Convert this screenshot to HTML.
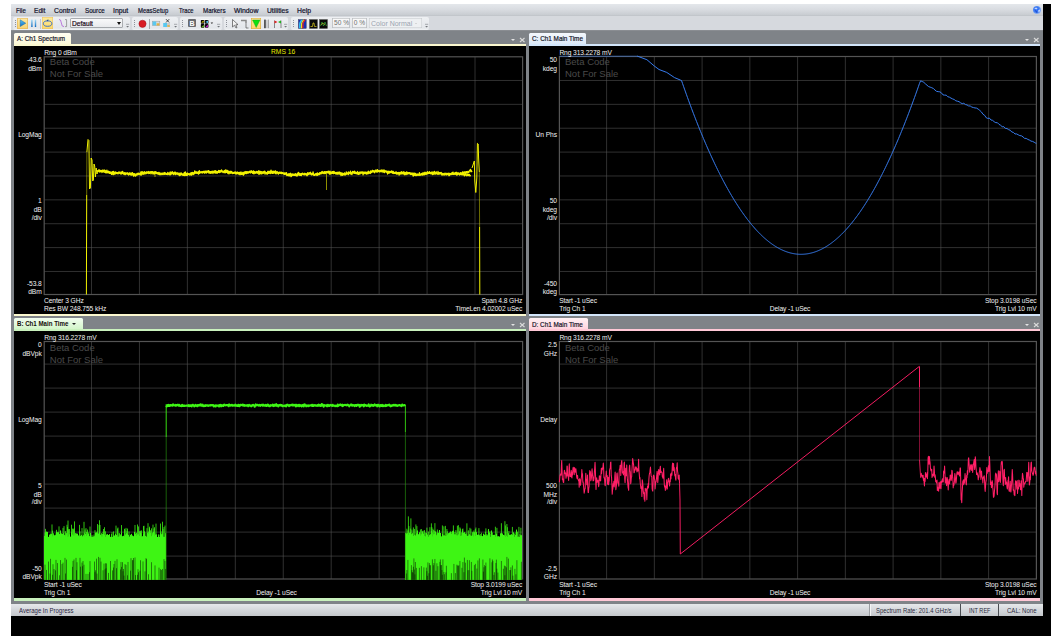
<!DOCTYPE html><html><head><meta charset="utf-8"><style>html,body{margin:0;padding:0;width:1060px;height:642px;overflow:hidden;background:#fff;}body{position:relative;font-family:"Liberation Sans", sans-serif;}.t{font-family:"Liberation Sans", sans-serif;}</style></head><body>
<div style="position:absolute;left:0.00px;top:0.00px;width:1060.00px;height:642.00px;background:#ffffff;"></div>
<div style="position:absolute;left:11.00px;top:4.00px;width:1040.00px;height:632.00px;background:#000000;"></div>
<div style="position:absolute;left:11.00px;top:4.00px;width:1032.00px;height:12.00px;background:linear-gradient(#e4e7eb,#d9dce1 45%,#c8ccd1 92%,#bcc0c5);"></div>
<div style="position:absolute;left:11.00px;top:16.00px;width:1032.00px;height:14.00px;background:#d6d9de;"></div>
<div style="position:absolute;left:11.00px;top:30.00px;width:1032.00px;height:573.50px;background:#7f8388;"></div>
<div style="position:absolute;left:11.00px;top:30.00px;width:1032.00px;height:1.20px;background:#8a8d92;"></div>
<div style="position:absolute;left:11.00px;top:603.50px;width:1032.00px;height:12.00px;background:linear-gradient(#e6e8eb,#d4d7db 50%,#c4c7cb);"></div>
<svg style="position:absolute;left:1031px;top:4px" width="12" height="12"><defs><radialGradient id="gl" cx="45%" cy="45%" r="55%"><stop offset="0" stop-color="#2a6af8"/><stop offset="0.6" stop-color="#3a78f0"/><stop offset="1" stop-color="#9ab8f0"/></radialGradient></defs><circle cx="6" cy="6" r="4.1" fill="url(#gl)"/><path d="M3.2 4.5 L5 3.4 L6.6 4.2 L5.4 5.6 Z M7.2 6.2 L9.2 5.2 L8.8 7.6 L7.4 8.2 Z" fill="#d8e6ff" opacity="0.85"/><path d="M4.5 6.4 L6 8.8" stroke="#1840c0" stroke-width="0.9"/></svg>
<div style="position:absolute;left:13.00px;top:17.00px;width:117.00px;height:12.50px;background:linear-gradient(#eef0f3,#e3e6ea 85%,#f2f4f6);border-radius:2px;"></div>
<div style="position:absolute;left:14.8px;top:19.5px;width:1px;height:8px;background:repeating-linear-gradient(#8e929a 0 0.8px,transparent 0.8px 2px);"></div>
<svg style="position:absolute;left:124.8px;top:22px" width="6" height="7"><path d="M1 2.3 H4.2" stroke="#8a8d92" stroke-width="0.7"/><path d="M1.2 4 L4 4 L2.6 5.6 Z" fill="#6f7277"/></svg>
<div style="position:absolute;left:132.00px;top:17.00px;width:46.00px;height:12.50px;background:linear-gradient(#eef0f3,#e3e6ea 85%,#f2f4f6);border-radius:2px;"></div>
<div style="position:absolute;left:133.8px;top:19.5px;width:1px;height:8px;background:repeating-linear-gradient(#8e929a 0 0.8px,transparent 0.8px 2px);"></div>
<svg style="position:absolute;left:172.8px;top:22px" width="6" height="7"><path d="M1 2.3 H4.2" stroke="#8a8d92" stroke-width="0.7"/><path d="M1.2 4 L4 4 L2.6 5.6 Z" fill="#6f7277"/></svg>
<div style="position:absolute;left:180.00px;top:17.00px;width:41.50px;height:12.50px;background:linear-gradient(#eef0f3,#e3e6ea 85%,#f2f4f6);border-radius:2px;"></div>
<div style="position:absolute;left:181.8px;top:19.5px;width:1px;height:8px;background:repeating-linear-gradient(#8e929a 0 0.8px,transparent 0.8px 2px);"></div>
<svg style="position:absolute;left:216.3px;top:22px" width="6" height="7"><path d="M1 2.3 H4.2" stroke="#8a8d92" stroke-width="0.7"/><path d="M1.2 4 L4 4 L2.6 5.6 Z" fill="#6f7277"/></svg>
<div style="position:absolute;left:224.00px;top:17.00px;width:64.00px;height:12.50px;background:linear-gradient(#eef0f3,#e3e6ea 85%,#f2f4f6);border-radius:2px;"></div>
<div style="position:absolute;left:225.8px;top:19.5px;width:1px;height:8px;background:repeating-linear-gradient(#8e929a 0 0.8px,transparent 0.8px 2px);"></div>
<svg style="position:absolute;left:282.8px;top:22px" width="6" height="7"><path d="M1 2.3 H4.2" stroke="#8a8d92" stroke-width="0.7"/><path d="M1.2 4 L4 4 L2.6 5.6 Z" fill="#6f7277"/></svg>
<div style="position:absolute;left:291.00px;top:17.00px;width:138.00px;height:12.50px;background:linear-gradient(#eef0f3,#e3e6ea 85%,#f2f4f6);border-radius:2px;"></div>
<div style="position:absolute;left:292.8px;top:19.5px;width:1px;height:8px;background:repeating-linear-gradient(#8e929a 0 0.8px,transparent 0.8px 2px);"></div>
<svg style="position:absolute;left:423.8px;top:22px" width="6" height="7"><path d="M1 2.3 H4.2" stroke="#8a8d92" stroke-width="0.7"/><path d="M1.2 4 L4 4 L2.6 5.6 Z" fill="#6f7277"/></svg>
<div style="position:absolute;left:17.20px;top:18.00px;width:10.70px;height:10.70px;background:linear-gradient(#fdeaa6,#f9d270);box-shadow:inset 0 0 0 0.6px #e2b04e;border-radius:1px;"></div>
<svg style="position:absolute;left:17px;top:18px" width="12" height="12"><defs><linearGradient id="pl" x1="0" y1="0" x2="0" y2="1"><stop offset="0" stop-color="#5cc4f4"/><stop offset="1" stop-color="#0f6cc0"/></linearGradient></defs><path d="M3.2 1.8 L8.8 5.2 L3.2 8.6 Z" fill="url(#pl)" stroke="#0b5aa0" stroke-width="0.4"/></svg>
<svg style="position:absolute;left:30px;top:18px" width="8" height="12"><defs><linearGradient id="pa" x1="0" y1="0" x2="0" y2="1"><stop offset="0" stop-color="#a8e0f8"/><stop offset="1" stop-color="#0f6cc0"/></linearGradient></defs><rect x="1.2" y="1.5" width="1.4" height="7.5" fill="url(#pa)"/><rect x="4.8" y="1.5" width="1.4" height="7.5" fill="url(#pa)"/></svg>
<div style="position:absolute;left:40.30px;top:18.50px;width:0.50px;height:10.00px;background:#c4c8cc;"></div>
<div style="position:absolute;left:41.60px;top:17.20px;width:11.90px;height:11.80px;background:linear-gradient(#feec9d,#fbd868);box-shadow:inset 0 0 0 0.5px #ecc060;"></div>
<svg style="position:absolute;left:41px;top:17px" width="13" height="13"><ellipse cx="6.6" cy="6.6" rx="4.2" ry="2.7" fill="none" stroke="#2a64c8" stroke-width="0.9"/><path d="M5.6 3.0 L7.6 2.6 L6.8 4.6 Z" fill="#1848a8"/></svg>
<svg style="position:absolute;left:58px;top:18px" width="11" height="12"><path d="M1 1.5 L2.5 2 L4.2 8 L6 8.6" fill="none" stroke="#b060d8" stroke-width="0.8"/><path d="M7 1.6 H8.6 V8.6 H7" fill="none" stroke="#8a8a8a" stroke-width="0.8"/></svg>
<div style="position:absolute;left:69.80px;top:17.60px;width:53.20px;height:10.70px;background:linear-gradient(#fbfbfc,#e6e8eb);box-shadow:inset 0 0 0 0.7px #8f9397;border-radius:2px;"></div>
<div style="position:absolute;left:117px;top:21.5px;width:0;height:0;border-left:2.5px solid transparent;border-right:2.5px solid transparent;border-top:3px solid #111;"></div>
<svg style="position:absolute;left:137px;top:18px" width="12" height="12"><circle cx="5.5" cy="5.8" r="3.6" fill="#d81c24" stroke="#a01018" stroke-width="0.5"/></svg>
<div style="position:absolute;left:149.20px;top:18.50px;width:0.50px;height:10.00px;background:#a4a8ad;"></div>
<svg style="position:absolute;left:151px;top:18px" width="10" height="12"><rect x="1.3" y="3.2" width="7.5" height="4.5" fill="#d8dadc" stroke="#9a9a9a" stroke-width="0.5"/><rect x="1.6" y="3.5" width="3.6" height="3.9" fill="#58c8f0"/><rect x="5.6" y="5.3" width="2.8" height="2.2" fill="#e0b040"/></svg>
<svg style="position:absolute;left:162px;top:17px" width="10" height="13"><rect x="1.2" y="6" width="3.8" height="4" fill="#58c8f0"/><rect x="5" y="6" width="3" height="4" fill="#c8cacc"/><rect x="5.3" y="8.2" width="2.5" height="1.6" fill="#e0b040"/><path d="M4 2.2 L7.2 5.5 M7.2 2.2 L4 5.5" stroke="#222" stroke-width="0.8"/></svg>
<div style="position:absolute;left:188.00px;top:19.00px;width:8.00px;height:8.00px;background:#6a6c70;border-radius:1px;"></div>
<svg style="position:absolute;left:200px;top:18.5px" width="10" height="10"><rect x="0.3" y="0.6" width="8.6" height="8.6" fill="#fff" rx="0.5"/><rect x="0.8" y="1.1" width="3.6" height="3.6" fill="#080808" rx="0.6"/><rect x="4.9" y="1.1" width="3.6" height="3.6" fill="#080808" rx="0.6"/><rect x="0.8" y="5.1" width="3.6" height="3.6" fill="#080808" rx="0.6"/><rect x="4.9" y="5.1" width="3.6" height="3.6" fill="#080808" rx="0.6"/><path d="M1.2 3.6 H3.6 V1.6 Z" fill="#f0e000"/><path d="M5.4 3 L8 1.6 V4.2 Z" fill="#50c8f0"/><path d="M1.2 8.2 L3.8 8.2 L3.8 6 Z" fill="#70d020"/><path d="M5.5 8.2 L7.8 8.2 L7.8 5.6 Z" fill="#e020e0"/></svg>
<svg style="position:absolute;left:210px;top:21px" width="4" height="4"><path d="M0.6 1.5 L3.2 1.5 L1.9 3 Z" fill="#333"/></svg>
<svg style="position:absolute;left:231px;top:18px" width="8" height="12"><path d="M1.5 1.5 L1.5 9 L3.5 7.2 L5 10 L6 9.5 L4.8 6.8 L7 6.6 Z" fill="#f4f4f4" stroke="#333" stroke-width="0.6"/></svg>
<svg style="position:absolute;left:240px;top:18px" width="10" height="12"><path d="M1 2.5 L6 2.5 L6 5" fill="none" stroke="#888" stroke-width="1.5"/><path d="M6 5 L6 10 L8.5 10" fill="none" stroke="#555" stroke-width="0.7"/></svg>
<div style="position:absolute;left:251.00px;top:17.80px;width:10.20px;height:11.00px;background:linear-gradient(#feeba0,#fbd567);box-shadow:inset 0 0 0 0.6px #d9a83a;"></div>
<svg style="position:absolute;left:251px;top:18px" width="11" height="11"><path d="M1.5 2 L9 2 L5.2 9.5 Z" fill="#10e010" stroke="#0a9a0a" stroke-width="0.4"/></svg>
<svg style="position:absolute;left:263px;top:18px" width="8" height="12"><rect x="1.3" y="1.6" width="1.3" height="8.6" fill="#1a1a1a"/><rect x="4.9" y="1.6" width="0.6" height="8.6" fill="#666"/><path d="M2.8 3 H4.4 M2.8 5 H4.4 M2.8 7 H4.4 M2.8 9 H4.4" stroke="#777" stroke-width="0.5"/></svg>
<svg style="position:absolute;left:273px;top:18px" width="10" height="12"><path d="M1.5 10 V2.5 M8 10 V2.5" stroke="#444" stroke-width="0.6"/><path d="M1.5 2.5 L4.5 4 L1.5 5.5Z" fill="#e02020"/><path d="M8 2.5 L5 4 L8 5.5Z" fill="#20b020"/></svg>
<svg style="position:absolute;left:297.5px;top:18.5px" width="9" height="10"><rect x="0.3" y="0.5" width="8" height="9" fill="#1830b0"/><path d="M1.5 9.5 C2.5 7 1 5 2.5 3 S3.5 1 4 0.5" stroke="#30c0f8" stroke-width="1.6" fill="none"/><path d="M3.2 9.5 C4.2 7 2.7 5 4.2 3 S5.2 1 5.7 0.5" stroke="#f0e020" stroke-width="1.2" fill="none"/><path d="M4.6 9.5 C5.6 7 4.1 5 5.6 3 S6.6 1 7.1 0.5" stroke="#f02020" stroke-width="1.2" fill="none"/><rect x="0.3" y="0.5" width="8" height="9" fill="none" stroke="#445" stroke-width="0.4"/></svg>
<svg style="position:absolute;left:308.5px;top:18.5px" width="9" height="10"><rect x="0.5" y="0.5" width="8" height="9" fill="#0a0a0a" stroke="#555" stroke-width="0.4"/><path d="M1.5 7.5 L3.5 7.5 L4 4 L5 4 L5.5 7.5 L7.5 7.5" stroke="#e0d020" stroke-width="0.7" fill="none"/></svg>
<svg style="position:absolute;left:318.5px;top:18.5px" width="9" height="10"><rect x="0.5" y="0.5" width="8" height="9" fill="#0a0a0a" stroke="#555" stroke-width="0.4"/><path d="M1.5 7 L3 3 L4.5 7 L6 3 L7.5 7" stroke="#40c040" stroke-width="0.6" fill="none"/><path d="M2 6 L4 4 L6 6" stroke="#e0d020" stroke-width="0.5" fill="none"/></svg>
<div style="position:absolute;left:332.40px;top:17.50px;width:18.10px;height:10.80px;background:linear-gradient(#fafafa,#eceef0);box-shadow:inset 0 0 0 0.6px #a6aaae;border-radius:1px;"></div>
<div style="position:absolute;left:352.00px;top:17.50px;width:15.00px;height:10.80px;background:linear-gradient(#fafafa,#eceef0);box-shadow:inset 0 0 0 0.6px #a6aaae;border-radius:1px;"></div>
<div style="position:absolute;left:368.50px;top:17.50px;width:53.50px;height:10.80px;background:#eef0f2;box-shadow:inset 0 0 0 0.5px #c4c7cb;"></div>
<div style="position:absolute;left:415px;top:22.5px;width:0;height:0;border-left:1.5px solid transparent;border-right:1.5px solid transparent;border-top:1.5px solid #bbb;"></div>
<div style="position:absolute;left:14.00px;top:33.00px;width:57.00px;height:11.00px;background:linear-gradient(#fffdf2,#fcf9d8);border-radius:1.5px 1.5px 0 0;"></div>
<div style="position:absolute;left:14.00px;top:44.00px;width:512.00px;height:2.00px;background:#fbf8cf;"></div>
<div style="position:absolute;left:14.00px;top:46.00px;width:512.00px;height:267.60px;background:#000;"></div>
<div style="position:absolute;left:14.00px;top:313.60px;width:512.00px;height:2.40px;background:#fbf8cf;"></div>
<div style="position:absolute;left:511.0px;top:39.0px;width:0;height:0;border-left:2px solid transparent;border-right:2px solid transparent;border-top:2px solid #e4e4e4;"></div>
<svg style="position:absolute;left:518.5px;top:36.5px" width="7" height="7"><path d="M1 1 L5.5 5 M5.5 1 L1 5" stroke="#dadada" stroke-width="1.1"/></svg>
<div style="position:absolute;left:529.00px;top:33.00px;width:57.00px;height:11.00px;background:linear-gradient(#f4f8fd,#dbe8f8);border-radius:1.5px 1.5px 0 0;"></div>
<div style="position:absolute;left:529.00px;top:44.00px;width:511.20px;height:2.00px;background:#d3e6fb;"></div>
<div style="position:absolute;left:529.00px;top:46.00px;width:511.20px;height:267.60px;background:#000;"></div>
<div style="position:absolute;left:529.00px;top:313.60px;width:511.20px;height:2.40px;background:#d3e6fb;"></div>
<div style="position:absolute;left:1025.2px;top:39.0px;width:0;height:0;border-left:2px solid transparent;border-right:2px solid transparent;border-top:2px solid #e4e4e4;"></div>
<svg style="position:absolute;left:1032.7px;top:36.5px" width="7" height="7"><path d="M1 1 L5.5 5 M5.5 1 L1 5" stroke="#dadada" stroke-width="1.1"/></svg>
<div style="position:absolute;left:14.00px;top:318.20px;width:68.50px;height:11.00px;background:linear-gradient(#f2fdf0,#d3f5ca);border-radius:1.5px 1.5px 0 0;"></div>
<div style="position:absolute;left:14.00px;top:329.20px;width:512.00px;height:1.80px;background:#c9f1bd;"></div>
<div style="position:absolute;left:14.00px;top:331.00px;width:512.00px;height:267.00px;background:#000;"></div>
<div style="position:absolute;left:14.00px;top:598.00px;width:512.00px;height:2.75px;background:#c9f1bd;"></div>
<div style="position:absolute;left:511.0px;top:324.0px;width:0;height:0;border-left:2px solid transparent;border-right:2px solid transparent;border-top:2px solid #e4e4e4;"></div>
<svg style="position:absolute;left:518.5px;top:321.5px" width="7" height="7"><path d="M1 1 L5.5 5 M5.5 1 L1 5" stroke="#dadada" stroke-width="1.1"/></svg>
<div style="position:absolute;left:529.00px;top:318.20px;width:58.50px;height:11.00px;background:linear-gradient(#fff1f4,#ffd3de);border-radius:1.5px 1.5px 0 0;"></div>
<div style="position:absolute;left:529.00px;top:329.20px;width:511.20px;height:1.80px;background:#ffc8d6;"></div>
<div style="position:absolute;left:529.00px;top:331.00px;width:511.20px;height:267.00px;background:#000;"></div>
<div style="position:absolute;left:529.00px;top:598.00px;width:511.20px;height:2.75px;background:#ffc8d6;"></div>
<div style="position:absolute;left:1025.2px;top:324.0px;width:0;height:0;border-left:2px solid transparent;border-right:2px solid transparent;border-top:2px solid #e4e4e4;"></div>
<svg style="position:absolute;left:1032.7px;top:321.5px" width="7" height="7"><path d="M1 1 L5.5 5 M5.5 1 L1 5" stroke="#dadada" stroke-width="1.1"/></svg>
<div style="position:absolute;left:72.3px;top:323.2px;width:0;height:0;border-left:2.2px solid transparent;border-right:2.2px solid transparent;border-top:2.6px solid #222;"></div>
<div style="position:absolute;left:869.00px;top:604.00px;width:1.00px;height:11.50px;background:#9a9da2;"></div>
<div style="position:absolute;left:870.00px;top:604.00px;width:1.00px;height:11.50px;background:#f4f5f6;"></div>
<div style="position:absolute;left:959.50px;top:604.00px;width:1.30px;height:11.50px;background:#4a4d52;"></div>
<div style="position:absolute;left:998.20px;top:604.00px;width:1.30px;height:11.50px;background:#4a4d52;"></div>
<svg style="position:absolute;left:0;top:0" width="1060" height="642" viewBox="0 0 1060 642"><path d="M91.50 56.80V294.50M44.20 80.47H522.60M139.44 56.80V294.50M44.20 104.35H522.60M187.38 56.80V294.50M44.20 128.22H522.60M235.32 56.80V294.50M44.20 152.10H522.60M283.26 56.80V294.50M44.20 175.97H522.60M331.20 56.80V294.50M44.20 199.85H522.60M379.14 56.80V294.50M44.20 223.72H522.60M427.08 56.80V294.50M44.20 247.60H522.60M475.02 56.80V294.50M44.20 271.48H522.60" stroke="#585858" stroke-width="0.55" fill="none"/><rect x="44.20" y="56.80" width="478.40" height="237.70" stroke="#545454" stroke-width="1.2" fill="none"/><path d="M606.60 56.50V294.60M559.40 80.47H1036.40M654.35 56.50V294.60M559.40 104.35H1036.40M702.10 56.50V294.60M559.40 128.22H1036.40M749.85 56.50V294.60M559.40 152.10H1036.40M797.60 56.50V294.60M559.40 175.97H1036.40M845.35 56.50V294.60M559.40 199.85H1036.40M893.10 56.50V294.60M559.40 223.72H1036.40M940.85 56.50V294.60M559.40 247.60H1036.40M988.60 56.50V294.60M559.40 271.48H1036.40" stroke="#585858" stroke-width="0.55" fill="none"/><rect x="559.40" y="56.50" width="477.00" height="238.10" stroke="#545454" stroke-width="1.2" fill="none"/><path d="M91.50 341.50V579.00M44.20 364.10H522.60M139.44 341.50V579.00M44.20 388.10H522.60M187.38 341.50V579.00M44.20 412.10H522.60M235.32 341.50V579.00M44.20 436.10H522.60M283.26 341.50V579.00M44.20 460.10H522.60M331.20 341.50V579.00M44.20 484.10H522.60M379.14 341.50V579.00M44.20 508.10H522.60M427.08 341.50V579.00M44.20 532.10H522.60M475.02 341.50V579.00M44.20 556.10H522.60" stroke="#585858" stroke-width="0.55" fill="none"/><rect x="44.20" y="341.50" width="478.40" height="237.50" stroke="#545454" stroke-width="1.2" fill="none"/><path d="M606.60 341.50V579.00M559.40 364.10H1036.40M654.35 341.50V579.00M559.40 388.10H1036.40M702.10 341.50V579.00M559.40 412.10H1036.40M749.85 341.50V579.00M559.40 436.10H1036.40M797.60 341.50V579.00M559.40 460.10H1036.40M845.35 341.50V579.00M559.40 484.10H1036.40M893.10 341.50V579.00M559.40 508.10H1036.40M940.85 341.50V579.00M559.40 532.10H1036.40M988.60 341.50V579.00M559.40 556.10H1036.40" stroke="#585858" stroke-width="0.55" fill="none"/><rect x="559.40" y="341.50" width="477.00" height="237.50" stroke="#545454" stroke-width="1.2" fill="none"/><path d="M86.4 294.5 L86.7 195" stroke="#f2f200" stroke-width="1.0"/><path d="M86.7 195 L86.9 152" stroke="#f2f200" stroke-width="0.45"/><polyline points="86.90,152.00 88.00,139.50 88.90,140.50 89.50,189.00 90.40,188.00 91.20,158.00 92.00,160.00 92.70,181.00 93.40,180.00 94.00,164.00 94.70,166.00 95.40,177.00 96.20,168.00 97.00,174.00 97.80,170.00" stroke="#f2f200" stroke-width="1.00" fill="none" stroke-linejoin="round" /><polyline points="97.80,170.66 98.15,170.91 98.50,170.48 98.85,170.01 99.20,170.39 99.55,170.00 99.90,170.88 100.25,171.95 100.60,170.53 100.95,170.48 101.30,171.42 101.65,171.38 102.00,171.23 102.35,170.47 102.70,171.25 103.05,171.90 103.40,170.33 103.75,171.11 104.10,170.03 104.45,170.58 104.80,170.21 105.15,171.56 105.50,170.80 105.85,172.10 106.20,172.08 106.55,171.86 106.90,170.06 107.25,171.70 107.60,172.15 107.95,172.34 108.30,171.08 108.65,171.97 109.00,171.61 109.35,171.79 109.70,173.33 110.05,171.87 110.40,172.53 110.75,173.29 111.10,172.15 111.45,172.55 111.80,172.75 112.15,172.73 112.50,171.72 112.85,172.77 113.20,173.81 113.55,171.50 113.90,173.43 114.25,172.84 114.60,172.24 114.95,174.36 115.30,173.37 115.65,171.80 116.00,172.82 116.35,173.22 116.70,172.61 117.05,173.31 117.40,172.71 117.75,173.30 118.10,173.92 118.45,172.23 118.80,172.94 119.15,172.42 119.50,172.90 119.85,171.86 120.20,172.36 120.55,172.68 120.90,173.57 121.25,173.79 121.60,171.84 121.95,172.29 122.30,173.47 122.65,171.39 123.00,172.65 123.35,172.98 123.70,174.10 124.05,173.68 124.40,172.91 124.75,172.93 125.10,173.07 125.45,174.54 125.80,173.02 126.15,173.18 126.50,173.75 126.85,173.43 127.20,173.42 127.55,172.74 127.90,173.67 128.25,173.38 128.60,174.72 128.95,174.36 129.30,173.87 129.65,174.47 130.00,173.71 130.35,174.87 130.70,174.06 131.05,174.57 131.40,173.11 131.75,174.45 132.10,172.85 132.45,172.60 132.80,174.00 133.15,173.54 133.50,174.41 133.85,176.08 134.20,173.62 134.55,173.79 134.90,174.44 135.25,174.66 135.60,174.11 135.95,174.07 136.30,174.77 136.65,174.60 137.00,173.33 137.35,174.05 137.70,174.11 138.05,173.19 138.40,174.19 138.75,173.25 139.10,174.66 139.45,173.98 139.80,173.84 140.15,173.24 140.50,173.56 140.85,171.99 141.20,172.62 141.55,173.75 141.90,171.69 142.25,174.01 142.60,171.87 142.95,173.81 143.30,172.47 143.65,173.70 144.00,173.13 144.35,171.74 144.70,173.91 145.05,174.01 145.40,172.76 145.75,172.55 146.10,172.60 146.45,171.91 146.80,173.53 147.15,172.19 147.50,172.56 147.85,171.94 148.20,172.06 148.55,171.52 148.90,173.54 149.25,172.40 149.60,173.30 149.95,172.54 150.30,171.98 150.65,172.29 151.00,172.12 151.35,172.59 151.70,172.31 152.05,172.39 152.40,171.56 152.75,172.05 153.10,174.05 153.45,172.22 153.80,171.96 154.15,173.11 154.50,174.01 154.85,171.76 155.20,172.80 155.55,172.50 155.90,171.64 156.25,173.68 156.60,173.12 156.95,173.24 157.30,172.62 157.65,173.62 158.00,172.87 158.35,173.22 158.70,172.48 159.05,172.43 159.40,174.50 159.75,173.05 160.10,173.72 160.45,173.48 160.80,173.17 161.15,173.14 161.50,174.06 161.85,173.33 162.20,173.45 162.55,173.60 162.90,174.53 163.25,174.13 163.60,173.89 163.95,173.13 164.30,172.46 164.65,174.32 165.00,174.32 165.35,173.42 165.70,173.96 166.05,174.13 166.40,174.15 166.75,174.21 167.10,173.09 167.45,174.65 167.80,172.42 168.15,174.09 168.50,173.78 168.85,174.07 169.20,174.86 169.55,174.53 169.90,172.42 170.25,171.97 170.60,173.97 170.95,172.50 171.30,173.30 171.65,173.98 172.00,171.99 172.35,171.63 172.70,173.53 173.05,173.37 173.40,173.15 173.75,173.39 174.10,172.69 174.45,172.19 174.80,173.30 175.15,172.68 175.50,172.17 175.85,173.93 176.20,173.51 176.55,173.92 176.90,172.84 177.25,173.15 177.60,172.92 177.95,173.05 178.30,173.97 178.65,173.23 179.00,174.19 179.35,174.22 179.70,175.61 180.05,172.92 180.40,174.79 180.75,174.05 181.10,174.15 181.45,173.04 181.80,173.87 182.15,174.87 182.50,174.24 182.85,174.40 183.20,174.12 183.55,175.30 183.90,174.38 184.25,172.65 184.60,173.86 184.95,172.85 185.30,171.82 185.65,173.99 186.00,175.47 186.35,174.43 186.70,173.44 187.05,173.60 187.40,175.23 187.75,174.41 188.10,174.29 188.45,174.16 188.80,174.19 189.15,174.75 189.50,174.49 189.85,174.16 190.20,173.09 190.55,174.27 190.90,173.24 191.25,174.59 191.60,172.63 191.95,173.46 192.30,173.48 192.65,172.35 193.00,174.70 193.35,174.41 193.70,172.79 194.05,173.69 194.40,173.30 194.75,170.82 195.10,173.03 195.45,172.70 195.80,172.74 196.15,171.73 196.50,172.30 196.85,172.30 197.20,173.33 197.55,172.58 197.90,172.24 198.25,173.41 198.60,171.69 198.95,171.77 199.30,170.58 199.65,173.24 200.00,172.71 200.35,172.64 200.70,172.41 201.05,171.93 201.40,171.99 201.75,171.59 202.10,171.61 202.45,171.81 202.80,172.96 203.15,172.19 203.50,171.69 203.85,171.28 204.20,171.23 204.55,173.03 204.90,172.16 205.25,171.81 205.60,171.49 205.95,170.89 206.30,171.74 206.65,172.50 207.00,171.51 207.35,171.65 207.70,171.67 208.05,171.95 208.40,170.60 208.75,171.70 209.10,171.22 209.45,172.62 209.80,171.30 210.15,172.39 210.50,173.15 210.85,171.69 211.20,171.46 211.55,172.09 211.90,171.94 212.25,171.14 212.60,172.30 212.95,173.53 213.30,171.70 213.65,171.73 214.00,171.04 214.35,172.12 214.70,170.85 215.05,170.94 215.40,172.82 215.75,171.05 216.10,172.61 216.45,172.94 216.80,171.90 217.15,172.11 217.50,173.20 217.85,171.45 218.20,171.11 218.55,170.47 218.90,171.56 219.25,172.68 219.60,172.24 219.95,170.70 220.30,170.74 220.65,171.00 221.00,171.62 221.35,171.21 221.70,171.54 222.05,171.59 222.40,171.11 222.75,171.31 223.10,171.51 223.45,171.29 223.80,171.76 224.15,172.87 224.50,171.86 224.85,171.46 225.20,170.09 225.55,171.78 225.90,169.94 226.25,170.41 226.60,172.26 226.95,172.18 227.30,171.54 227.65,170.35 228.00,171.47 228.35,171.28 228.70,172.39 229.05,173.75 229.40,172.18 229.75,171.45 230.10,171.21 230.45,172.17 230.80,172.14 231.15,171.43 231.50,172.51 231.85,171.57 232.20,173.45 232.55,173.48 232.90,173.56 233.25,172.38 233.60,173.24 233.95,172.78 234.30,172.63 234.65,172.73 235.00,172.01 235.35,171.95 235.70,173.79 236.05,173.04 236.40,173.40 236.75,174.07 237.10,171.91 237.45,172.69 237.80,173.48 238.15,173.67 238.50,173.07 238.85,174.20 239.20,173.55 239.55,172.41 239.90,172.63 240.25,174.01 240.60,173.72 240.95,171.81 241.30,174.38 241.65,173.76 242.00,174.32 242.35,172.91 242.70,172.94 243.05,172.24 243.40,175.13 243.75,172.91 244.10,174.28 244.45,172.44 244.80,173.05 245.15,171.53 245.50,172.51 245.85,173.55 246.20,171.71 246.55,173.52 246.90,172.89 247.25,171.74 247.60,172.12 247.95,172.11 248.30,172.40 248.65,171.97 249.00,171.70 249.35,172.08 249.70,171.47 250.05,171.23 250.40,172.20 250.75,172.92 251.10,170.97 251.45,172.18 251.80,171.65 252.15,171.37 252.50,172.83 252.85,171.73 253.20,173.35 253.55,171.53 253.90,172.47 254.25,171.98 254.60,171.57 254.95,172.66 255.30,172.08 255.65,172.71 256.00,172.21 256.35,171.40 256.70,172.21 257.05,172.36 257.40,173.11 257.75,171.65 258.10,172.37 258.45,171.05 258.80,172.98 259.15,171.62 259.50,171.06 259.85,172.48 260.20,173.44 260.55,171.36 260.90,171.73 261.25,172.02 261.60,171.73 261.95,172.95 262.30,172.02 262.65,172.10 263.00,173.15 263.35,172.08 263.70,173.04 264.05,171.91 264.40,171.72 264.75,171.22 265.10,174.17 265.45,172.41 265.80,172.85 266.15,172.62 266.50,172.75 266.85,172.65 267.20,174.11 267.55,171.74 267.90,171.30 268.25,171.71 268.60,171.43 268.95,173.07 269.30,173.11 269.65,171.66 270.00,171.29 270.35,172.09 270.70,173.47 271.05,170.08 271.40,172.74 271.75,171.44 272.10,173.12 272.45,171.41 272.80,172.03 273.15,171.05 273.50,171.47 273.85,173.36 274.20,172.91 274.55,171.94 274.90,171.58 275.25,170.77 275.60,171.99 275.95,172.30 276.30,172.29 276.65,172.31 277.00,171.53 277.35,172.41 277.70,172.48 278.05,173.59 278.40,174.11 278.75,172.56 279.10,172.12 279.45,172.74 279.80,172.37 280.15,172.34 280.50,172.96 280.85,172.25 281.20,173.64 281.55,173.15 281.90,173.52 282.25,173.26 282.60,172.90 282.95,172.81 283.30,173.46 283.65,173.30 284.00,174.01 284.35,173.90 284.70,172.90 285.05,174.12 285.40,173.07 285.75,173.73 286.10,174.06 286.45,172.70 286.80,174.50 287.15,174.62 287.50,174.43 287.85,174.27 288.20,174.36 288.55,173.93 288.90,174.54 289.25,174.35 289.60,174.90 289.95,173.90 290.30,175.07 290.65,175.02 291.00,174.81 291.35,174.58 291.70,175.38 292.05,173.61 292.40,175.31 292.75,175.13 293.10,175.15 293.45,175.22 293.80,174.37 294.15,174.66 294.50,175.36 294.85,175.16 295.20,174.96 295.55,173.55 295.90,175.15 296.25,175.62 296.60,175.46 296.95,174.80 297.30,173.33 297.65,175.29 298.00,174.38 298.35,172.43 298.70,174.72 299.05,173.18 299.40,173.30 299.75,173.80 300.10,175.29 300.45,173.94 300.80,174.42 301.15,175.57 301.50,175.42 301.85,174.04 302.20,173.90 302.55,173.07 302.90,173.50 303.25,174.38 303.60,174.35 303.95,174.11 304.30,174.81 304.65,173.39 305.00,173.96 305.35,174.58 305.70,174.47 306.05,174.86 306.40,174.32 306.75,173.76 307.10,174.31 307.45,173.22 307.80,172.72 308.15,174.51 308.50,174.01 308.85,174.31 309.20,172.71 309.55,173.78 309.90,173.60 310.25,173.40 310.60,172.29 310.95,173.83 311.30,174.82 311.65,174.41 312.00,173.62 312.35,174.08 312.70,174.69 313.05,171.87 313.40,173.96 313.75,174.48 314.10,174.57 314.45,175.37 314.80,174.89 315.15,174.20 315.50,174.16 315.85,174.52 316.20,173.42 316.55,173.77 316.90,174.49 317.25,175.28 317.60,173.54 317.95,173.57 318.30,173.72 318.65,174.57 319.00,173.42 319.35,174.56 319.70,172.54 320.05,173.11 320.40,173.03 320.75,173.76 321.10,173.90 321.45,171.79 321.80,172.20 322.15,173.14 322.50,172.28 322.85,171.53 323.20,173.52 323.55,173.03 323.90,172.97 324.25,172.14 324.60,173.30 324.95,172.24 325.30,173.27 325.65,171.62 326.00,171.63 326.35,172.45 326.70,171.70 327.05,172.78 327.40,172.43 327.75,171.47 328.10,172.26 328.45,171.92 328.80,172.93 329.15,171.70 329.50,171.87 329.85,173.20 330.20,174.04 330.55,173.87 330.90,172.35 331.25,172.51 331.60,173.60 331.95,172.31 332.30,171.67 332.65,172.59 333.00,172.91 333.35,171.93 333.70,171.33 334.05,171.55 334.40,173.29 334.75,172.21 335.10,172.76 335.45,173.10 335.80,173.48 336.15,172.78 336.50,173.50 336.85,172.44 337.20,172.92 337.55,172.44 337.90,174.22 338.25,173.34 338.60,172.82 338.95,173.17 339.30,173.31 339.65,174.09 340.00,172.28 340.35,172.76 340.70,173.31 341.05,175.66 341.40,174.42 341.75,173.58 342.10,174.25 342.45,175.33 342.80,173.50 343.15,173.40 343.50,174.66 343.85,174.07 344.20,174.20 344.55,173.24 344.90,175.17 345.25,174.98 345.60,174.04 345.95,174.11 346.30,171.91 346.65,174.01 347.00,173.31 347.35,173.78 347.70,173.94 348.05,173.09 348.40,171.97 348.75,173.58 349.10,172.65 349.45,172.95 349.80,172.69 350.15,172.86 350.50,171.25 350.85,174.04 351.20,173.24 351.55,173.89 351.90,174.56 352.25,172.96 352.60,171.48 352.95,172.18 353.30,171.91 353.65,172.46 354.00,172.91 354.35,171.23 354.70,173.09 355.05,171.60 355.40,173.05 355.75,172.72 356.10,172.55 356.45,172.75 356.80,172.38 357.15,172.33 357.50,171.48 357.85,172.81 358.20,174.32 358.55,174.44 358.90,173.92 359.25,173.45 359.60,172.35 359.95,174.06 360.30,172.88 360.65,172.88 361.00,172.72 361.35,173.03 361.70,172.62 362.05,172.91 362.40,172.12 362.75,172.69 363.10,174.82 363.45,172.94 363.80,172.80 364.15,173.42 364.50,173.55 364.85,172.08 365.20,172.79 365.55,173.67 365.90,173.14 366.25,172.99 366.60,174.11 366.95,172.29 367.30,172.87 367.65,172.35 368.00,173.91 368.35,171.11 368.70,172.09 369.05,172.15 369.40,173.05 369.75,172.95 370.10,173.52 370.45,171.08 370.80,172.88 371.15,171.98 371.50,171.62 371.85,172.51 372.20,171.28 372.55,170.28 372.90,171.58 373.25,170.61 373.60,171.22 373.95,171.97 374.30,171.86 374.65,172.81 375.00,171.32 375.35,170.20 375.70,170.76 376.05,170.58 376.40,170.29 376.75,171.57 377.10,170.66 377.45,169.56 377.80,171.66 378.15,170.98 378.50,171.33 378.85,171.11 379.20,171.52 379.55,171.03 379.90,171.99 380.25,171.34 380.60,171.31 380.95,171.34 381.30,169.86 381.65,170.91 382.00,170.86 382.35,171.26 382.70,170.04 383.05,172.47 383.40,171.29 383.75,170.28 384.10,169.93 384.45,171.13 384.80,171.34 385.15,170.89 385.50,171.60 385.85,171.07 386.20,172.09 386.55,171.14 386.90,171.75 387.25,172.63 387.60,173.98 387.95,171.18 388.30,171.68 388.65,171.45 389.00,172.82 389.35,171.33 389.70,171.93 390.05,172.35 390.40,171.66 390.75,171.73 391.10,172.17 391.45,170.92 391.80,171.50 392.15,172.37 392.50,172.87 392.85,172.64 393.20,171.41 393.55,172.49 393.90,173.53 394.25,173.37 394.60,172.89 394.95,172.26 395.30,173.50 395.65,172.55 396.00,172.09 396.35,172.39 396.70,174.20 397.05,173.23 397.40,173.98 397.75,172.68 398.10,173.81 398.45,172.58 398.80,172.94 399.15,175.05 399.50,173.68 399.85,172.66 400.20,172.99 400.55,173.32 400.90,174.03 401.25,172.67 401.60,171.67 401.95,172.84 402.30,173.08 402.65,173.16 403.00,174.13 403.35,173.34 403.70,173.75 404.05,172.24 404.40,173.83 404.75,174.83 405.10,173.79 405.45,173.40 405.80,173.35 406.15,174.69 406.50,172.55 406.85,173.24 407.20,173.73 407.55,174.00 407.90,173.09 408.25,173.73 408.60,173.31 408.95,173.68 409.30,173.52 409.65,172.77 410.00,173.71 410.35,174.48 410.70,173.06 411.05,173.69 411.40,174.47 411.75,173.13 412.10,174.18 412.45,173.24 412.80,175.04 413.15,176.03 413.50,175.84 413.85,174.09 414.20,174.90 414.55,174.44 414.90,174.45 415.25,175.64 415.60,173.37 415.95,175.29 416.30,174.43 416.65,175.61 417.00,174.64 417.35,173.96 417.70,174.72 418.05,175.09 418.40,174.52 418.75,174.87 419.10,174.05 419.45,172.74 419.80,175.14 420.15,174.95 420.50,174.48 420.85,174.38 421.20,175.11 421.55,173.87 421.90,173.63 422.25,173.99 422.60,175.04 422.95,172.93 423.30,174.93 423.65,173.41 424.00,172.98 424.35,174.81 424.70,173.66 425.05,172.64 425.40,173.33 425.75,174.30 426.10,174.45 426.45,173.09 426.80,173.70 427.15,173.89 427.50,172.75 427.85,173.49 428.20,173.13 428.55,172.68 428.90,172.68 429.25,173.08 429.60,173.02 429.95,172.51 430.30,172.59 430.65,173.80 431.00,173.06 431.35,173.58 431.70,173.82 432.05,173.32 432.40,174.66 432.75,172.19 433.10,173.50 433.45,172.61 433.80,174.36 434.15,174.26 434.50,171.35 434.85,172.17 435.20,173.50 435.55,173.63 435.90,173.63 436.25,173.02 436.60,173.48 436.95,173.68 437.30,173.14 437.65,174.07 438.00,171.49 438.35,173.85 438.70,172.56 439.05,174.21 439.40,173.30 439.75,172.82 440.10,173.88 440.45,172.90 440.80,172.95 441.15,172.47 441.50,173.74 441.85,174.20 442.20,174.66 442.55,173.77 442.90,174.75 443.25,173.96 443.60,173.90 443.95,174.46 444.30,174.87 444.65,173.78 445.00,173.87 445.35,173.95 445.70,174.16 446.05,173.38 446.40,174.93 446.75,173.79 447.10,174.48 447.45,173.45 447.80,174.40 448.15,174.42 448.50,173.76 448.85,175.70 449.20,174.37 449.55,175.49 449.90,174.82 450.25,173.51 450.60,173.72 450.95,174.36 451.30,174.05 451.65,174.02 452.00,173.74 452.35,172.51 452.70,173.77 453.05,172.16 453.40,174.23 453.75,173.34 454.10,173.35 454.45,173.74 454.80,174.14 455.15,172.78 455.50,172.53 455.85,173.08 456.20,172.31 456.55,173.19 456.90,175.25 457.25,173.15 457.60,174.54 457.95,172.95 458.30,174.22 458.65,173.65 459.00,173.79 459.35,174.22 459.70,175.10 460.05,173.79 460.40,173.67 460.75,172.73 461.10,173.91 461.45,173.19 461.80,173.99 462.15,173.23 462.50,174.60 462.85,171.56 463.20,172.85 463.55,173.74 463.90,172.69 464.25,172.27 464.60,172.63 464.95,171.67 465.30,172.80 465.65,174.59 466.00,173.47 466.35,171.59 466.70,171.70 467.05,171.99 467.40,173.03 467.75,171.47 468.10,171.48 468.45,172.64 468.80,172.51 469.15,171.41 469.50,170.70 469.85,170.23 470.20,170.78 470.55,169.43 470.90,171.68 471.25,170.43 471.60,171.17 471.95,172.13" stroke="#f2f200" stroke-width="1.30" fill="none" stroke-linejoin="round" /><path d="M479.3 172 L479.6 227" stroke="#f2f200" stroke-width="0.45"/><path d="M479.6 227 L479.8 294.5" stroke="#f2f200" stroke-width="1.0"/><polyline points="472.00,168.00 474.30,161.00 474.80,181.00 475.80,192.50 476.80,178.00 477.40,143.30 478.20,144.00 478.60,158.00 479.30,172.00" stroke="#f2f200" stroke-width="1.00" fill="none" stroke-linejoin="round" /><polyline points="98.00,171.77 98.50,170.41 99.00,171.66 99.50,171.88 100.00,170.80 100.50,170.74 101.00,171.32 101.50,170.50 102.00,172.43 102.50,170.19 103.00,171.06 103.50,171.66 104.00,171.78 104.50,172.11 105.00,172.27 105.50,172.08 106.00,172.98 106.50,171.11 107.00,172.48 107.50,172.13 108.00,172.72 108.50,172.84 109.00,172.23 109.50,172.46 110.00,173.37 110.50,173.15 111.00,172.58 111.50,174.24 112.00,174.44 112.50,172.20 113.00,173.27 113.50,174.61 114.00,173.59 114.50,173.26 115.00,173.00 115.50,172.81 116.00,173.00 116.50,172.80 117.00,173.58 117.50,172.89 118.00,172.87 118.50,172.42 119.00,173.12 119.50,172.62 120.00,173.07 120.50,173.82 121.00,173.44 121.50,173.56 122.00,173.50 122.50,173.37 123.00,173.30 123.50,173.24 124.00,173.94 124.50,172.90 125.00,174.42 125.50,173.70 126.00,173.30 126.50,173.53 127.00,173.49 127.50,174.07 128.00,173.62 128.50,174.81 129.00,173.73 129.50,172.90 130.00,173.89 130.50,173.19 131.00,174.42 131.50,175.13 132.00,174.93 132.50,173.77 133.00,174.14 133.50,175.68 134.00,174.82 134.50,174.63 135.00,175.25 135.50,176.07 136.00,175.35 136.50,174.62 137.00,174.70 137.50,174.81 138.00,174.01 138.50,173.67 139.00,174.26 139.50,173.59 140.00,174.03 140.50,174.04 141.00,175.30 141.50,173.29 142.00,173.63 142.50,173.51 143.00,173.78 143.50,174.06 144.00,173.05 144.50,172.77 145.00,172.21 145.50,172.57 146.00,173.38 146.50,173.03 147.00,172.35 147.50,172.69 148.00,172.90 148.50,173.16 149.00,172.49 149.50,172.69 150.00,171.76 150.50,172.17 151.00,173.85 151.50,171.59 152.00,172.74 152.50,173.11 153.00,172.80 153.50,172.59 154.00,173.09 154.50,173.19 155.00,173.20 155.50,172.18 156.00,173.28 156.50,172.92 157.00,173.16 157.50,173.68 158.00,173.99 158.50,174.19 159.00,173.40 159.50,174.30 160.00,174.48 160.50,174.49 161.00,174.67 161.50,173.77 162.00,173.76 162.50,174.37 163.00,173.06 163.50,174.00 164.00,173.55 164.50,173.64 165.00,172.80 165.50,173.29 166.00,173.79 166.50,174.31 167.00,174.34 167.50,173.67 168.00,173.58 168.50,173.17 169.00,173.89 169.50,173.48 170.00,173.98 170.50,174.65 171.00,173.57 171.50,172.69 172.00,173.07 172.50,172.72 173.00,172.89 173.50,174.41 174.00,173.79 174.50,172.77 175.00,174.11 175.50,174.52 176.00,173.60 176.50,173.46 177.00,173.72 177.50,174.15 178.00,174.43 178.50,174.81 179.00,174.90 179.50,174.95 180.00,175.11 180.50,174.76 181.00,173.50 181.50,174.39 182.00,174.71 182.50,174.34 183.00,175.15 183.50,174.42 184.00,174.11 184.50,175.54 185.00,175.08 185.50,174.81 186.00,175.22 186.50,175.28 187.00,174.81 187.50,173.09 188.00,174.11 188.50,174.18 189.00,173.79 189.50,174.42 190.00,174.93 190.50,173.83 191.00,173.34 191.50,175.13 192.00,173.53 192.50,172.95 193.00,173.71 193.50,173.71 194.00,172.91 194.50,173.69 195.00,172.80 195.50,172.43 196.00,172.97 196.50,173.22 197.00,172.28 197.50,172.76 198.00,172.41 198.50,174.08 199.00,171.88 199.50,173.07 200.00,172.15 200.50,172.05 201.00,172.51 201.50,172.58 202.00,172.77 202.50,172.19 203.00,171.62 203.50,171.65 204.00,172.27 204.50,172.32 205.00,172.82 205.50,172.24 206.00,172.64 206.50,172.93 207.00,172.14 207.50,171.17 208.00,171.38 208.50,171.24 209.00,173.07 209.50,171.62 210.00,172.88 210.50,172.50 211.00,173.19 211.50,172.76 212.00,172.09 212.50,172.03 213.00,172.18 213.50,172.22 214.00,171.77 214.50,172.05 215.00,173.00 215.50,170.98 216.00,172.12 216.50,171.38 217.00,172.00 217.50,172.35 218.00,171.77 218.50,172.23 219.00,170.77 219.50,172.35 220.00,171.29 220.50,171.99 221.00,171.70 221.50,170.02 222.00,171.10 222.50,171.68 223.00,172.48 223.50,171.72 224.00,171.72 224.50,170.74 225.00,172.48 225.50,172.74 226.00,171.72 226.50,171.62 227.00,170.84 227.50,172.41 228.00,173.58 228.50,172.47 229.00,172.88 229.50,172.54 230.00,171.72 230.50,173.21 231.00,171.76 231.50,172.48 232.00,172.87 232.50,173.33 233.00,173.15 233.50,173.22 234.00,172.62 234.50,172.38 235.00,173.27 235.50,172.88 236.00,172.58 236.50,172.66 237.00,173.17 237.50,172.39 238.00,172.72 238.50,172.56 239.00,173.66 239.50,173.80 240.00,174.75 240.50,172.62 241.00,173.09 241.50,174.01 242.00,173.29 242.50,173.17 243.00,174.34 243.50,173.05 244.00,172.49 244.50,172.33 245.00,173.25 245.50,173.16 246.00,172.08 246.50,172.24 247.00,173.09 247.50,173.04 248.00,172.25 248.50,172.95 249.00,172.86 249.50,171.40 250.00,172.24 250.50,172.63 251.00,172.01 251.50,171.05 252.00,172.14 252.50,172.75 253.00,173.24 253.50,170.98 254.00,173.87 254.50,171.64 255.00,172.91 255.50,173.11 256.00,172.98 256.50,172.51 257.00,171.76 257.50,172.87 258.00,172.10 258.50,171.06 259.00,174.31 259.50,173.07 260.00,173.77 260.50,172.17 261.00,173.62 261.50,173.72 262.00,173.72 262.50,172.79 263.00,172.09 263.50,172.72 264.00,171.50 264.50,171.80 265.00,172.87 265.50,172.20 266.00,172.68 266.50,172.69 267.00,173.89 267.50,173.48 268.00,172.64 268.50,173.36 269.00,172.13 269.50,172.36 270.00,173.07 270.50,171.75 271.00,172.29 271.50,171.64 272.00,172.48 272.50,173.37 273.00,171.92 273.50,172.50 274.00,171.83 274.50,171.69 275.00,171.65 275.50,173.29 276.00,173.86 276.50,172.78 277.00,172.11 277.50,173.02 278.00,172.46 278.50,173.22 279.00,172.99 279.50,173.08 280.00,173.37 280.50,172.76 281.00,172.98 281.50,172.30 282.00,173.18 282.50,172.71 283.00,173.60 283.50,173.23 284.00,173.98 284.50,174.31 285.00,173.30 285.50,173.78 286.00,173.80 286.50,174.92 287.00,175.59 287.50,175.16 288.00,174.52 288.50,175.68 289.00,173.95 289.50,175.81 290.00,174.56 290.50,173.32 291.00,176.60 291.50,175.97 292.00,174.41 292.50,175.13 293.00,174.88 293.50,175.05 294.00,174.07 294.50,174.52 295.00,175.17 295.50,174.98 296.00,175.51 296.50,174.79 297.00,176.10 297.50,174.20 298.00,174.73 298.50,173.37 299.00,173.71 299.50,175.20 300.00,173.79 300.50,174.62 301.00,174.22 301.50,173.59 302.00,173.97 302.50,173.84 303.00,173.83 303.50,174.55 304.00,174.48 304.50,173.73 305.00,173.52 305.50,174.23 306.00,174.00 306.50,174.69 307.00,175.67 307.50,174.59 308.00,174.08 308.50,174.01 309.00,173.61 309.50,173.59 310.00,173.54 310.50,173.91 311.00,173.90 311.50,174.60 312.00,173.91 312.50,174.03 313.00,173.40 313.50,175.10 314.00,174.39 314.50,175.13 315.00,174.49 315.50,174.86 316.00,173.77 316.50,174.29 317.00,175.42 317.50,172.99 318.00,174.36 318.50,174.59 319.00,173.74 319.50,173.86 320.00,174.07 320.50,172.81 321.00,173.37 321.50,172.49 322.00,172.52 322.50,172.47 323.00,172.67 323.50,172.77 324.00,172.88 324.50,171.65 325.00,173.67 325.50,173.11 326.00,172.79 326.50,172.09 327.00,172.22 327.50,172.58 328.00,172.48 328.50,171.19 329.00,172.69 329.50,174.04 330.00,171.13 330.50,172.91 331.00,172.56 331.50,172.32 332.00,173.28 332.50,171.77 333.00,172.67 333.50,173.54 334.00,172.59 334.50,172.54 335.00,172.94 335.50,172.68 336.00,173.99 336.50,172.56 337.00,173.73 337.50,172.50 338.00,173.75 338.50,173.34 339.00,171.87 339.50,173.52 340.00,172.91 340.50,173.34 341.00,174.59 341.50,172.98 342.00,173.03 342.50,174.58 343.00,173.77 343.50,174.64 344.00,173.88 344.50,173.11 345.00,173.59 345.50,174.35 346.00,174.14 346.50,173.51 347.00,173.50 347.50,173.35 348.00,173.01 348.50,174.50 349.00,173.26 349.50,172.50 350.00,172.85 350.50,173.54 351.00,173.44 351.50,172.91 352.00,172.54 352.50,172.93 353.00,171.85 353.50,172.05 354.00,173.32 354.50,172.52 355.00,173.03 355.50,173.54 356.00,173.19 356.50,172.80 357.00,174.11 357.50,173.22 358.00,172.60 358.50,173.28 359.00,173.10 359.50,172.34 360.00,172.93 360.50,172.80 361.00,171.71 361.50,172.83 362.00,172.78 362.50,172.69 363.00,171.95 363.50,172.75 364.00,172.94 364.50,173.02 365.00,172.24 365.50,173.30 366.00,172.13 366.50,172.70 367.00,173.60 367.50,172.32 368.00,172.37 368.50,173.28 369.00,172.31 369.50,172.28 370.00,172.52 370.50,172.94 371.00,170.84 371.50,171.60 372.00,171.39 372.50,171.24 373.00,171.29 373.50,171.20 374.00,171.80 374.50,170.98 375.00,171.51 375.50,171.60 376.00,170.83 376.50,171.28 377.00,172.14 377.50,171.28 378.00,170.64 378.50,170.96 379.00,170.40 379.50,171.12 380.00,171.47 380.50,170.44 381.00,170.83 381.50,171.66 382.00,170.70 382.50,171.17 383.00,170.47 383.50,170.66 384.00,170.91 384.50,172.60 385.00,171.13 385.50,171.14 386.00,171.21 386.50,171.54 387.00,172.13 387.50,171.95 388.00,173.16 388.50,172.15 389.00,172.99 389.50,172.38 390.00,172.66 390.50,171.52 391.00,172.39 391.50,172.50 392.00,172.46 392.50,171.38 393.00,173.26 393.50,172.55 394.00,172.56 394.50,172.71 395.00,172.76 395.50,173.17 396.00,172.18 396.50,172.40 397.00,173.14 397.50,173.06 398.00,172.75 398.50,172.64 399.00,172.48 399.50,172.94 400.00,173.68 400.50,172.34 401.00,173.88 401.50,173.48 402.00,172.70 402.50,173.45 403.00,172.11 403.50,171.96 404.00,172.25 404.50,172.80 405.00,172.88 405.50,172.80 406.00,173.21 406.50,171.91 407.00,173.54 407.50,172.45 408.00,172.96 408.50,173.17 409.00,172.79 409.50,172.73 410.00,173.02 410.50,173.69 411.00,174.13 411.50,174.18 412.00,173.32 412.50,173.51 413.00,173.50 413.50,174.38 414.00,172.95 414.50,174.97 415.00,173.98 415.50,173.84 416.00,174.54 416.50,174.98 417.00,174.59 417.50,175.02 418.00,174.46 418.50,175.11 419.00,175.10 419.50,174.26 420.00,175.15 420.50,174.34 421.00,174.24 421.50,173.57 422.00,173.88 422.50,174.45 423.00,173.12 423.50,174.21 424.00,173.94 424.50,173.81 425.00,172.23 425.50,173.41 426.00,173.77 426.50,172.84 427.00,173.26 427.50,171.70 428.00,173.46 428.50,172.59 429.00,173.45 429.50,171.76 430.00,173.24 430.50,172.64 431.00,173.23 431.50,172.17 432.00,172.34 432.50,174.05 433.00,172.21 433.50,172.30 434.00,172.58 434.50,172.16 435.00,173.52 435.50,173.89 436.00,172.48 436.50,171.92 437.00,173.72 437.50,173.74 438.00,173.64 438.50,173.91 439.00,172.76 439.50,173.25 440.00,172.59 440.50,172.63 441.00,174.14 441.50,173.21 442.00,175.04 442.50,173.77 443.00,173.39 443.50,174.29 444.00,174.93 444.50,174.17 445.00,173.18 445.50,174.15 446.00,174.76 446.50,173.65 447.00,173.49 447.50,174.56 448.00,174.02 448.50,173.27 449.00,173.69 449.50,173.45 450.00,174.06 450.50,173.93 451.00,174.53 451.50,174.24 452.00,172.86 452.50,174.03 453.00,174.30 453.50,174.03 454.00,174.36 454.50,173.41 455.00,173.17 455.50,174.31 456.00,173.12 456.50,172.48 457.00,174.42 457.50,173.40 458.00,173.68 458.50,173.07 459.00,173.16 459.50,173.31 460.00,173.84 460.50,174.34 461.00,172.80 461.50,174.69 462.00,173.60 462.50,173.73 463.00,174.84 463.50,174.46 464.00,173.64 464.50,175.73 465.00,174.16 465.50,174.87 466.00,174.89 466.50,175.65 467.00,174.56 467.50,175.46 468.00,174.42 468.50,175.54 469.00,174.40 469.50,174.63 470.00,175.95 470.50,174.97" stroke="#f2f200" stroke-width="1.40" fill="none" stroke-linejoin="round" /><path d="M155 172 V177 M326.5 173 V190" stroke="#f2f200" stroke-width="0.6"/><path d="M559.4 56.2 H637" stroke="#3a82fa" stroke-width="0.7" stroke-opacity="0.7"/><polyline points="637.00,56.00 641.00,57.50 646.90,59.70 654.30,66.00 659.00,69.50 666.70,72.40 674.50,77.60 680.70,80.20 681.50,80.51 682.50,83.41 683.50,86.28 684.50,89.13 685.50,91.95 686.50,94.75 687.50,97.52 688.50,100.27 689.50,103.00 690.50,105.70 691.50,108.38 692.50,111.03 693.50,113.66 694.50,116.26 695.50,118.84 696.50,121.40 697.50,123.93 698.50,126.44 699.50,128.92 700.50,131.38 701.50,133.81 702.50,136.22 703.50,138.61 704.50,140.97 705.50,143.31 706.50,145.62 707.50,147.91 708.50,150.17 709.50,152.41 710.50,154.62 711.50,156.82 712.50,158.98 713.50,161.12 714.50,163.24 715.50,165.33 716.50,167.40 717.50,169.45 718.50,171.47 719.50,173.46 720.50,175.44 721.50,177.38 722.50,179.31 723.50,181.20 724.50,183.08 725.50,184.93 726.50,186.75 727.50,188.55 728.50,190.33 729.50,192.08 730.50,193.81 731.50,195.52 732.50,197.20 733.50,198.85 734.50,200.48 735.50,202.09 736.50,203.67 737.50,205.23 738.50,206.76 739.50,208.27 740.50,209.75 741.50,211.22 742.50,212.65 743.50,214.06 744.50,215.45 745.50,216.81 746.50,218.15 747.50,219.47 748.50,220.76 749.50,222.02 750.50,223.26 751.50,224.48 752.50,225.67 753.50,226.84 754.50,227.99 755.50,229.11 756.50,230.20 757.50,231.27 758.50,232.32 759.50,233.34 760.50,234.34 761.50,235.31 762.50,236.26 763.50,237.19 764.50,238.09 765.50,238.96 766.50,239.81 767.50,240.64 768.50,241.45 769.50,242.22 770.50,242.98 771.50,243.71 772.50,244.41 773.50,245.10 774.50,245.75 775.50,246.39 776.50,246.99 777.50,247.58 778.50,248.14 779.50,248.67 780.50,249.19 781.50,249.67 782.50,250.13 783.50,250.57 784.50,250.99 785.50,251.38 786.50,251.74 787.50,252.08 788.50,252.40 789.50,252.69 790.50,252.96 791.50,253.20 792.50,253.42 793.50,253.62 794.50,253.79 795.50,253.93 796.50,254.05 797.50,254.15 798.50,254.22 799.50,254.27 800.50,254.30 801.50,254.30 802.50,254.27 803.50,254.22 804.50,254.15 805.50,254.05 806.50,253.93 807.50,253.79 808.50,253.62 809.50,253.42 810.50,253.20 811.50,252.96 812.50,252.69 813.50,252.40 814.50,252.08 815.50,251.74 816.50,251.38 817.50,250.99 818.50,250.57 819.50,250.13 820.50,249.67 821.50,249.19 822.50,248.67 823.50,248.14 824.50,247.58 825.50,246.99 826.50,246.39 827.50,245.75 828.50,245.10 829.50,244.41 830.50,243.71 831.50,242.98 832.50,242.22 833.50,241.45 834.50,240.64 835.50,239.81 836.50,238.96 837.50,238.09 838.50,237.19 839.50,236.26 840.50,235.31 841.50,234.34 842.50,233.34 843.50,232.32 844.50,231.27 845.50,230.20 846.50,229.11 847.50,227.99 848.50,226.84 849.50,225.67 850.50,224.48 851.50,223.26 852.50,222.02 853.50,220.76 854.50,219.47 855.50,218.15 856.50,216.81 857.50,215.45 858.50,214.06 859.50,212.65 860.50,211.22 861.50,209.75 862.50,208.27 863.50,206.76 864.50,205.23 865.50,203.67 866.50,202.09 867.50,200.48 868.50,198.85 869.50,197.20 870.50,195.52 871.50,193.81 872.50,192.08 873.50,190.33 874.50,188.55 875.50,186.75 876.50,184.93 877.50,183.08 878.50,181.20 879.50,179.31 880.50,177.38 881.50,175.44 882.50,173.46 883.50,171.47 884.50,169.45 885.50,167.40 886.50,165.33 887.50,163.24 888.50,161.12 889.50,158.98 890.50,156.82 891.50,154.62 892.50,152.41 893.50,150.17 894.50,147.91 895.50,145.62 896.50,143.31 897.50,140.97 898.50,138.61 899.50,136.22 900.50,133.81 901.50,131.38 902.50,128.92 903.50,126.44 904.50,123.93 905.50,121.40 906.50,118.84 907.50,116.26 908.50,113.66 909.50,111.03 910.50,108.38 911.50,105.70 912.50,103.00 913.50,100.27 914.50,97.52 915.50,94.75 916.50,91.95 917.50,89.13 918.50,86.28 919.50,83.41 920.60,80.80 922.20,81.49 923.80,82.31 925.40,83.85 927.00,85.21 928.60,86.59 930.20,87.16 931.80,87.74 933.40,88.52 935.00,90.09 936.60,91.37 938.20,91.64 939.80,91.84 941.40,92.84 943.00,94.88 944.60,95.13 946.20,95.14 947.80,96.76 949.40,97.16 951.00,98.14 952.60,98.91 954.20,99.51 955.80,100.78 957.40,101.21 959.00,101.66 960.60,102.80 962.20,103.67 963.80,103.25 965.40,104.56 967.00,104.92 968.60,105.95 970.20,105.96 971.80,107.06 973.40,107.55 975.00,107.94 976.60,108.11 978.20,109.13 979.80,110.43 981.40,111.94 983.00,114.27 984.60,115.29 986.20,117.71 987.80,118.42 989.40,118.11 991.00,120.04 992.60,120.33 994.20,121.75 995.80,122.67 997.40,122.66 999.00,124.36 1000.60,125.26 1002.20,126.72 1003.80,126.67 1005.40,128.44 1007.00,128.52 1008.60,129.68 1010.20,130.21 1011.80,132.00 1013.40,132.37 1015.00,133.97 1016.60,133.93 1018.20,134.78 1019.80,135.62 1021.40,135.81 1023.00,136.89 1024.60,138.37 1026.20,138.41 1027.80,139.42 1029.40,140.07 1031.00,141.10 1032.60,141.41 1034.20,142.25 1035.80,143.18 1036.30,143.30" stroke="#3a82fa" stroke-width="0.95" fill="none" stroke-linejoin="round" /><path d="M44.50 535.92V579.90M45.50 532.47V579.90M46.50 531.64V579.90M47.50 531.94V579.90M48.50 536.86V579.90M49.50 534.60V579.90M50.50 534.59V579.90M51.50 533.75V579.90M52.50 536.33V579.90M53.50 534.50V579.90M54.50 535.25V579.90M55.50 535.09V579.90M56.50 531.92V579.90M57.50 532.29V579.90M58.50 532.34V579.90M59.50 534.09V579.90M60.50 530.45V579.90M61.50 533.37V579.90M62.50 533.93V579.90M63.50 533.14V579.90M64.50 535.11V579.90M65.50 536.36V579.90M66.50 534.54V579.90M67.50 536.99V579.90M68.50 536.56V579.90M69.50 534.32V579.90M70.50 536.63V579.90M71.50 532.25V579.90M72.50 534.68V579.90M73.50 535.59V579.90M74.50 535.50V579.90M75.50 534.41V579.90M76.50 533.46V579.90M77.50 533.96V579.90M78.50 535.45V579.90M79.50 536.51V579.90M80.50 535.82V579.90M81.50 534.97V579.90M82.50 536.28V579.90M83.50 535.18V579.90M84.50 536.43V579.90M85.50 534.04V579.90M86.50 535.98V579.90M87.50 534.45V579.90M88.50 533.90V579.90M89.50 536.13V579.90M90.50 532.91V579.90M91.50 536.70V579.90M92.50 536.76V579.90M93.50 536.41V579.90M94.50 536.20V579.90M95.50 532.98V579.90M96.50 532.73V579.90M97.50 533.35V579.90M98.50 533.48V579.90M99.50 531.83V579.90M100.50 534.80V579.90M101.50 536.48V579.90M102.50 536.67V579.90M103.50 533.86V579.90M104.50 534.83V579.90M105.50 536.77V579.90M106.50 534.92V579.90M107.50 535.08V579.90M108.50 535.00V579.90M109.50 534.20V579.90M110.50 536.82V579.90M111.50 536.95V579.90M112.50 536.94V579.90M113.50 535.64V579.90M114.50 535.47V579.90M115.50 533.89V579.90M116.50 535.05V579.90M117.50 536.75V579.90M118.50 536.59V579.90M119.50 536.40V579.90M120.50 535.41V579.90M121.50 532.74V579.90M122.50 536.18V579.90M123.50 535.80V579.90M124.50 536.40V579.90M125.50 534.46V579.90M126.50 533.18V579.90M127.50 534.22V579.90M128.50 534.92V579.90M129.50 536.64V579.90M130.50 534.78V579.90M131.50 533.85V579.90M132.50 535.50V579.90M133.50 536.16V579.90M134.50 531.94V579.90M135.50 534.16V579.90M136.50 535.94V579.90M137.50 534.47V579.90M138.50 534.33V579.90M139.50 535.99V579.90M140.50 532.74V579.90M141.50 536.70V579.90M142.50 536.19V579.90M143.50 534.02V579.90M144.50 531.31V579.90M145.50 535.84V579.90M146.50 536.59V579.90M147.50 532.74V579.90M148.50 533.75V579.90M149.50 528.18V579.90M150.50 532.85V579.90M151.50 536.21V579.90M152.50 534.57V579.90M153.50 531.80V579.90M154.50 535.80V579.90M155.50 534.59V579.90M156.50 534.35V579.90M157.50 536.97V579.90M158.50 536.40V579.90M159.50 536.95V579.90M160.50 533.18V579.90M161.50 534.30V579.90M162.50 533.93V579.90M163.50 536.80V579.90M164.50 536.80V579.90M165.50 534.56V579.90" stroke="#3ef514" stroke-width="1.0" fill="none"/><path d="M45.00 540V532.36M45.50 540V528.85M47.50 540V532.88M50.50 540V533.59M52.00 540V524.44M52.50 540V530.58M53.50 540V533.21M56.00 540V533.23M56.50 540V529.82M57.00 540V533.25M58.00 540V531.88M58.50 540V533.70M59.00 540V526.36M59.50 540V534.08M60.50 540V533.29M61.50 540V534.89M63.00 540V527.92M64.00 540V526.12M65.00 540V534.90M65.50 540V531.16M66.00 540V533.18M66.50 540V533.07M67.00 540V524.78M67.50 540V526.93M68.00 540V520.56M68.50 540V529.19M69.50 540V529.08M71.50 540V524.72M72.50 540V528.64M73.50 540V529.30M74.00 540V528.43M74.50 540V521.38M75.00 540V533.49M75.50 540V532.97M76.00 540V534.19M77.50 540V533.54M79.50 540V524.86M80.00 540V531.42M82.00 540V528.16M84.00 540V521.83M84.50 540V532.71M85.00 540V529.52M86.00 540V528.14M86.50 540V532.01M87.50 540V529.56M88.00 540V531.88M88.50 540V533.39M90.00 540V526.56M92.00 540V534.96M94.00 540V534.55M95.00 540V530.12M96.00 540V532.10M97.00 540V531.66M97.50 540V524.03M99.00 540V525.06M99.50 540V520.24M100.00 540V524.98M101.50 540V533.17M102.00 540V534.24M102.50 540V534.02M103.00 540V531.77M103.50 540V529.01M104.50 540V527.22M105.50 540V531.33M107.00 540V533.85M107.50 540V533.98M109.50 540V534.27M111.50 540V534.09M112.00 540V532.18M113.50 540V531.43M115.50 540V533.81M116.00 540V525.61M117.50 540V528.57M118.00 540V527.57M119.00 540V533.24M119.50 540V533.28M120.50 540V534.39M121.50 540V525.07M124.50 540V528.75M125.00 540V529.52M126.00 540V527.91M127.00 540V531.08M127.50 540V528.55M129.00 540V531.43M135.00 540V524.98M135.50 540V534.22M136.00 540V532.65M136.50 540V532.79M137.50 540V524.49M138.50 540V526.44M139.50 540V531.15M140.50 540V530.74M141.00 540V533.46M141.50 540V530.38M143.50 540V526.09M144.00 540V525.78M145.00 540V532.34M147.00 540V528.15M148.00 540V523.19M148.50 540V531.62M149.50 540V526.70M150.50 540V530.29M151.50 540V528.33M152.50 540V532.60M153.00 540V524.63M154.00 540V528.66M154.50 540V527.25M155.00 540V532.63M156.00 540V523.61M158.50 540V534.48M159.00 540V534.64M160.50 540V523.54M161.00 540V531.38M162.00 540V533.49M162.50 540V521.71M163.00 540V528.92M164.00 540V527.01M165.00 540V525.57M165.50 540V533.05" stroke="#3ef514" stroke-width="0.8" fill="none"/><path d="M45.00 579.90V564.65M46.50 579.90V569.94M48.50 579.90V561.55M50.00 579.90V573.53M50.50 579.90V558.80M52.50 579.90V574.76M53.00 579.90V564.23M54.00 579.90V569.02M55.50 579.90V570.33M56.00 579.90V559.90M57.50 579.90V563.05M59.50 579.90V575.31M60.50 579.90V560.09M62.00 579.90V564.05M63.00 579.90V562.65M65.00 579.90V557.86M65.50 579.90V573.52M66.50 579.90V559.57M72.50 579.90V566.83M73.00 579.90V560.93M74.00 579.90V559.47M76.00 579.90V557.87M76.50 579.90V570.21M77.00 579.90V562.22M80.00 579.90V557.83M80.50 579.90V566.63M82.00 579.90V562.58M82.50 579.90V566.28M83.00 579.90V561.05M84.00 579.90V564.74M86.00 579.90V573.89M88.00 579.90V573.91M89.50 579.90V572.20M90.00 579.90V561.12M94.50 579.90V561.50M95.00 579.90V572.17M95.50 579.90V570.29M96.50 579.90V558.67M97.00 579.90V573.60M98.50 579.90V556.90M100.00 579.90V557.79M101.00 579.90V561.55M103.00 579.90V570.30M104.00 579.90V563.59M105.00 579.90V569.38M105.50 579.90V563.29M106.00 579.90V568.24M106.50 579.90V563.42M108.50 579.90V572.90M110.50 579.90V561.01M112.50 579.90V570.42M113.50 579.90V567.54M114.00 579.90V564.02M115.00 579.90V560.88M116.50 579.90V568.18M117.00 579.90V559.30M120.50 579.90V569.44M121.00 579.90V561.94M121.50 579.90V566.85M122.50 579.90V562.17M123.00 579.90V571.19M123.50 579.90V568.97M124.00 579.90V575.58M125.00 579.90V564.11M126.00 579.90V564.93M127.50 579.90V575.32M128.00 579.90V561.97M130.50 579.90V570.67M131.00 579.90V558.12M132.50 579.90V560.19M133.00 579.90V560.16M133.50 579.90V558.03M135.00 579.90V557.49M135.50 579.90V575.03M137.50 579.90V574.81M138.00 579.90V569.24M138.50 579.90V572.26M140.00 579.90V570.66M140.50 579.90V560.25M143.00 579.90V561.44M145.00 579.90V571.36M146.00 579.90V558.13M146.50 579.90V559.07M148.50 579.90V574.24M151.50 579.90V562.21M155.00 579.90V565.43M159.00 579.90V567.61M160.50 579.90V569.15M161.50 579.90V570.05M162.50 579.90V568.97M164.00 579.90V559.09M165.00 579.90V560.95M165.50 579.90V568.96" stroke="#000" stroke-opacity="0.8" stroke-width="0.6" fill="none"/><path d="M405.50 532.81V579.90M406.50 533.39V579.90M407.50 533.09V579.90M408.50 535.13V579.90M409.50 532.66V579.90M410.50 532.20V579.90M411.50 534.17V579.90M412.50 533.21V579.90M413.50 535.93V579.90M414.50 534.90V579.90M415.50 535.58V579.90M416.50 533.36V579.90M417.50 530.53V579.90M418.50 534.32V579.90M419.50 532.22V579.90M420.50 535.65V579.90M421.50 534.38V579.90M422.50 531.84V579.90M423.50 533.54V579.90M424.50 535.91V579.90M425.50 536.42V579.90M426.50 533.06V579.90M427.50 534.55V579.90M428.50 536.69V579.90M429.50 535.07V579.90M430.50 534.70V579.90M431.50 530.94V579.90M432.50 536.49V579.90M433.50 534.31V579.90M434.50 534.14V579.90M435.50 531.49V579.90M436.50 535.26V579.90M437.50 533.43V579.90M438.50 532.73V579.90M439.50 530.03V579.90M440.50 532.95V579.90M441.50 536.37V579.90M442.50 533.75V579.90M443.50 535.37V579.90M444.50 535.32V579.90M445.50 535.88V579.90M446.50 535.72V579.90M447.50 534.83V579.90M448.50 533.16V579.90M449.50 532.49V579.90M450.50 531.50V579.90M451.50 534.00V579.90M452.50 531.32V579.90M453.50 530.72V579.90M454.50 534.89V579.90M455.50 534.36V579.90M456.50 535.25V579.90M457.50 535.35V579.90M458.50 534.41V579.90M459.50 531.87V579.90M460.50 536.03V579.90M461.50 535.54V579.90M462.50 530.68V579.90M463.50 532.67V579.90M464.50 532.25V579.90M465.50 533.82V579.90M466.50 535.61V579.90M467.50 535.87V579.90M468.50 535.57V579.90M469.50 534.42V579.90M470.50 535.45V579.90M471.50 535.72V579.90M472.50 535.26V579.90M473.50 536.45V579.90M474.50 532.17V579.90M475.50 535.93V579.90M476.50 532.13V579.90M477.50 534.78V579.90M478.50 534.49V579.90M479.50 535.24V579.90M480.50 536.10V579.90M481.50 535.74V579.90M482.50 536.09V579.90M483.50 533.66V579.90M484.50 534.76V579.90M485.50 535.27V579.90M486.50 535.89V579.90M487.50 535.32V579.90M488.50 529.10V579.90M489.50 532.60V579.90M490.50 536.79V579.90M491.50 530.47V579.90M492.50 535.05V579.90M493.50 534.90V579.90M494.50 534.94V579.90M495.50 536.69V579.90M496.50 533.60V579.90M497.50 536.30V579.90M498.50 536.16V579.90M499.50 536.55V579.90M500.50 533.31V579.90M501.50 533.11V579.90M502.50 533.47V579.90M503.50 534.93V579.90M504.50 535.34V579.90M505.50 536.99V579.90M506.50 535.66V579.90M507.50 536.82V579.90M508.50 534.18V579.90M509.50 534.96V579.90M510.50 534.77V579.90M511.50 534.18V579.90M512.50 535.09V579.90M513.50 532.31V579.90M514.50 536.78V579.90M515.50 534.92V579.90M516.50 529.56V579.90M517.50 536.91V579.90M518.50 536.58V579.90M519.50 536.99V579.90M520.50 535.24V579.90M521.50 535.15V579.90" stroke="#3ef514" stroke-width="1.0" fill="none"/><path d="M406.90 540V528.71M407.90 540V530.38M408.40 540V516.39M408.90 540V526.09M410.40 540V528.55M410.90 540V518.40M411.90 540V529.56M413.40 540V527.38M414.40 540V528.94M414.90 540V534.85M415.90 540V524.43M416.90 540V526.14M417.40 540V530.92M417.90 540V533.78M419.40 540V533.16M420.40 540V529.49M420.90 540V533.48M421.40 540V529.06M422.40 540V530.88M423.90 540V530.75M424.40 540V530.04M425.40 540V532.51M426.90 540V527.66M428.40 540V531.57M429.90 540V527.21M430.40 540V534.10M431.40 540V523.33M431.90 540V527.15M432.40 540V532.58M432.90 540V528.74M433.40 540V529.97M434.40 540V530.71M434.90 540V523.17M435.90 540V534.51M436.90 540V532.46M437.40 540V529.54M437.90 540V533.73M439.40 540V531.63M442.40 540V525.41M443.90 540V526.37M445.40 540V525.86M446.40 540V533.27M446.90 540V529.01M447.40 540V531.29M447.90 540V534.16M449.40 540V534.16M451.40 540V532.12M452.40 540V530.83M453.40 540V525.40M454.40 540V533.84M454.90 540V531.96M455.90 540V530.04M456.40 540V532.72M457.40 540V525.73M458.40 540V525.14M459.40 540V531.00M459.90 540V527.36M460.40 540V528.49M461.40 540V532.41M462.40 540V529.12M462.90 540V528.52M464.90 540V532.33M466.40 540V533.39M466.90 540V523.31M468.40 540V530.35M469.40 540V534.50M469.90 540V527.81M470.90 540V528.74M472.40 540V532.43M472.90 540V531.75M473.40 540V532.15M473.90 540V530.43M475.40 540V528.86M475.90 540V527.50M478.90 540V528.14M480.40 540V534.08M481.40 540V532.71M483.90 540V534.75M485.40 540V531.84M485.90 540V528.36M486.40 540V534.29M487.90 540V534.32M488.40 540V530.00M489.90 540V531.26M490.90 540V534.14M492.40 540V532.44M494.90 540V534.72M495.40 540V526.71M496.90 540V527.86M501.40 540V523.23M504.90 540V521.21M505.40 540V525.44M505.90 540V532.32M506.90 540V524.02M507.40 540V527.19M508.40 540V533.00M508.90 540V531.06M510.90 540V534.80M512.40 540V526.92M514.40 540V533.48M515.90 540V532.34M516.90 540V532.45M517.40 540V531.74M518.90 540V526.88M519.90 540V534.18M520.90 540V527.77" stroke="#3ef514" stroke-width="0.8" fill="none"/><path d="M406.40 579.90V573.51M406.90 579.90V570.05M407.90 579.90V559.92M411.40 579.90V565.13M411.90 579.90V570.08M412.40 579.90V571.97M412.90 579.90V572.89M413.40 579.90V566.78M413.90 579.90V558.41M414.40 579.90V569.56M414.90 579.90V574.39M415.40 579.90V562.01M416.40 579.90V567.90M419.40 579.90V567.83M421.40 579.90V566.16M423.90 579.90V567.41M426.40 579.90V567.60M426.90 579.90V571.14M427.40 579.90V575.78M427.90 579.90V562.41M428.90 579.90V573.26M429.40 579.90V563.08M429.90 579.90V565.18M430.40 579.90V565.30M432.40 579.90V559.34M433.40 579.90V565.24M433.90 579.90V563.08M434.90 579.90V558.96M435.90 579.90V570.75M436.90 579.90V563.27M437.90 579.90V566.20M439.90 579.90V561.86M440.40 579.90V559.46M440.90 579.90V565.21M441.40 579.90V565.02M441.90 579.90V570.06M442.40 579.90V574.73M442.90 579.90V559.36M443.90 579.90V571.98M444.40 579.90V574.22M445.90 579.90V572.39M446.40 579.90V565.72M451.40 579.90V573.17M453.90 579.90V563.93M455.40 579.90V573.09M456.90 579.90V564.71M457.40 579.90V565.53M458.40 579.90V565.85M458.90 579.90V565.26M459.90 579.90V560.95M461.90 579.90V567.82M462.90 579.90V562.08M463.90 579.90V572.16M464.40 579.90V557.57M465.40 579.90V562.68M467.40 579.90V559.95M467.90 579.90V570.21M468.90 579.90V570.12M469.40 579.90V560.19M471.40 579.90V561.93M471.90 579.90V570.78M474.40 579.90V565.09M475.40 579.90V563.84M476.90 579.90V568.58M477.90 579.90V560.44M479.40 579.90V558.35M482.90 579.90V559.50M483.40 579.90V571.63M483.90 579.90V567.25M484.40 579.90V565.08M485.40 579.90V566.04M485.90 579.90V562.55M489.90 579.90V558.35M491.90 579.90V562.28M492.40 579.90V559.47M492.90 579.90V560.86M493.90 579.90V574.91M494.40 579.90V572.26M495.90 579.90V562.95M496.40 579.90V559.60M496.90 579.90V568.73M497.90 579.90V572.56M501.40 579.90V560.97M503.40 579.90V568.74M504.40 579.90V565.61M504.90 579.90V575.23M505.40 579.90V566.20M506.40 579.90V567.36M506.90 579.90V556.92M508.40 579.90V558.58M509.90 579.90V570.06M510.40 579.90V570.12M510.90 579.90V567.31M512.40 579.90V565.43M512.90 579.90V575.65M514.90 579.90V568.84M515.90 579.90V574.28M516.90 579.90V560.20M521.40 579.90V561.77" stroke="#000" stroke-opacity="0.8" stroke-width="0.6" fill="none"/><polyline points="166.20,405.45 166.70,406.52 167.20,405.58 167.70,404.99 168.20,405.77 168.70,404.81 169.20,405.96 169.70,406.00 170.20,405.11 170.70,405.09 171.20,405.49 171.70,405.41 172.20,404.91 172.70,405.68 173.20,404.38 173.70,405.18 174.20,405.20 174.70,405.26 175.20,405.55 175.70,404.79 176.20,405.69 176.70,405.31 177.20,405.07 177.70,404.72 178.20,404.81 178.70,405.58 179.20,404.92 179.70,405.43 180.20,405.93 180.70,405.92 181.20,406.18 181.70,405.25 182.20,404.86 182.70,405.91 183.20,405.55 183.70,405.96 184.20,405.41 184.70,406.00 185.20,405.82 185.70,405.76 186.20,405.65 186.70,405.60 187.20,405.52 187.70,405.51 188.20,405.90 188.70,405.14 189.20,406.27 189.70,405.35 190.20,405.89 190.70,405.35 191.20,405.28 191.70,406.42 192.20,405.25 192.70,404.76 193.20,405.04 193.70,405.24 194.20,406.48 194.70,405.50 195.20,405.87 195.70,404.90 196.20,405.58 196.70,405.74 197.20,406.30 197.70,405.05 198.20,405.70 198.70,405.55 199.20,404.89 199.70,405.39 200.20,405.27 200.70,404.24 201.20,405.70 201.70,405.67 202.20,405.18 202.70,404.73 203.20,406.14 203.70,405.53 204.20,405.91 204.70,406.11 205.20,405.14 205.70,405.81 206.20,405.28 206.70,405.37 207.20,405.36 207.70,405.40 208.20,405.96 208.70,405.46 209.20,405.32 209.70,405.26 210.20,405.57 210.70,404.95 211.20,405.15 211.70,405.37 212.20,405.12 212.70,405.34 213.20,405.09 213.70,406.40 214.20,406.06 214.70,405.62 215.20,405.37 215.70,406.50 216.20,405.56 216.70,405.36 217.20,405.55 217.70,405.55 218.20,406.11 218.70,405.39 219.20,406.45 219.70,404.96 220.20,405.75 220.70,404.90 221.20,406.31 221.70,405.23 222.20,405.37 222.70,405.86 223.20,406.03 223.70,404.84 224.20,405.23 224.70,404.70 225.20,405.47 225.70,405.35 226.20,405.23 226.70,405.06 227.20,405.21 227.70,405.03 228.20,405.66 228.70,406.16 229.20,404.43 229.70,405.34 230.20,405.19 230.70,405.65 231.20,404.92 231.70,405.33 232.20,404.88 232.70,405.75 233.20,405.45 233.70,405.32 234.20,405.59 234.70,405.28 235.20,404.62 235.70,405.70 236.20,405.54 236.70,405.32 237.20,405.89 237.70,406.01 238.20,404.85 238.70,405.01 239.20,406.17 239.70,406.11 240.20,405.03 240.70,404.81 241.20,405.08 241.70,405.15 242.20,404.61 242.70,405.42 243.20,404.76 243.70,404.79 244.20,405.86 244.70,405.06 245.20,405.36 245.70,405.71 246.20,405.81 246.70,405.23 247.20,405.42 247.70,404.99 248.20,406.27 248.70,405.72 249.20,404.85 249.70,405.40 250.20,405.76 250.70,405.64 251.20,406.31 251.70,406.09 252.20,405.13 252.70,405.36 253.20,404.76 253.70,405.52 254.20,405.48 254.70,406.75 255.20,405.45 255.70,404.35 256.20,405.06 256.70,405.46 257.20,404.77 257.70,404.97 258.20,405.22 258.70,405.57 259.20,405.32 259.70,404.96 260.20,405.79 260.70,405.13 261.20,405.15 261.70,404.71 262.20,405.01 262.70,405.73 263.20,404.59 263.70,405.36 264.20,405.76 264.70,405.21 265.20,405.52 265.70,404.84 266.20,406.06 266.70,405.95 267.20,405.52 267.70,404.52 268.20,404.88 268.70,405.89 269.20,406.26 269.70,405.55 270.20,406.02 270.70,405.10 271.20,405.31 271.70,405.40 272.20,405.61 272.70,404.64 273.20,405.87 273.70,406.06 274.20,404.83 274.70,404.72 275.20,405.58 275.70,405.07 276.20,404.21 276.70,405.80 277.20,405.48 277.70,405.16 278.20,406.46 278.70,405.47 279.20,405.02 279.70,405.45 280.20,404.88 280.70,405.02 281.20,405.59 281.70,405.12 282.20,405.17 282.70,406.23 283.20,405.83 283.70,405.80 284.20,405.66 284.70,405.64 285.20,406.13 285.70,405.39 286.20,406.33 286.70,404.92 287.20,405.27 287.70,404.71 288.20,405.23 288.70,405.66 289.20,406.13 289.70,405.07 290.20,405.40 290.70,405.22 291.20,405.03 291.70,404.81 292.20,405.43 292.70,404.53 293.20,405.46 293.70,405.41 294.20,405.07 294.70,404.89 295.20,404.71 295.70,406.34 296.20,404.73 296.70,406.18 297.20,405.70 297.70,405.22 298.20,404.82 298.70,405.92 299.20,406.26 299.70,404.93 300.20,405.25 300.70,405.93 301.20,405.57 301.70,406.40 302.20,405.11 302.70,405.67 303.20,404.77 303.70,406.45 304.20,405.03 304.70,404.30 305.20,405.34 305.70,405.33 306.20,406.36 306.70,405.23 307.20,405.39 307.70,405.70 308.20,406.19 308.70,405.37 309.20,405.92 309.70,405.66 310.20,405.25 310.70,405.44 311.20,405.41 311.70,404.94 312.20,406.01 312.70,404.71 313.20,405.99 313.70,405.88 314.20,405.35 314.70,405.02 315.20,405.29 315.70,405.64 316.20,405.77 316.70,405.54 317.20,405.90 317.70,405.12 318.20,405.52 318.70,404.62 319.20,405.78 319.70,405.48 320.20,405.19 320.70,405.98 321.20,405.75 321.70,403.99 322.20,405.42 322.70,404.67 323.20,405.93 323.70,406.64 324.20,405.14 324.70,405.44 325.20,405.27 325.70,405.58 326.20,405.72 326.70,406.04 327.20,404.91 327.70,406.19 328.20,404.93 328.70,405.54 329.20,405.98 329.70,405.76 330.20,404.93 330.70,405.05 331.20,405.17 331.70,405.37 332.20,405.97 332.70,404.75 333.20,405.63 333.70,405.70 334.20,405.68 334.70,405.63 335.20,406.16 335.70,405.64 336.20,405.83 336.70,405.68 337.20,406.30 337.70,404.45 338.20,406.04 338.70,405.27 339.20,405.26 339.70,404.92 340.20,404.47 340.70,405.21 341.20,405.06 341.70,405.65 342.20,404.66 342.70,406.12 343.20,405.54 343.70,405.28 344.20,405.05 344.70,405.01 345.20,404.83 345.70,405.13 346.20,405.40 346.70,405.31 347.20,404.69 347.70,405.27 348.20,404.95 348.70,405.48 349.20,406.33 349.70,405.71 350.20,405.24 350.70,404.59 351.20,404.69 351.70,404.56 352.20,405.76 352.70,405.02 353.20,405.43 353.70,405.09 354.20,405.45 354.70,406.10 355.20,405.06 355.70,405.23 356.20,405.00 356.70,405.84 357.20,404.89 357.70,404.83 358.20,404.71 358.70,404.70 359.20,405.64 359.70,406.68 360.20,404.90 360.70,405.88 361.20,405.53 361.70,404.85 362.20,405.26 362.70,405.28 363.20,405.05 363.70,406.37 364.20,404.45 364.70,405.59 365.20,405.57 365.70,405.11 366.20,405.47 366.70,405.84 367.20,405.48 367.70,405.61 368.20,405.75 368.70,404.38 369.20,406.14 369.70,406.54 370.20,405.89 370.70,405.91 371.20,404.70 371.70,405.34 372.20,404.99 372.70,405.11 373.20,405.88 373.70,405.00 374.20,405.33 374.70,404.45 375.20,405.32 375.70,405.45 376.20,405.05 376.70,405.04 377.20,406.34 377.70,404.80 378.20,404.87 378.70,405.00 379.20,406.00 379.70,406.45 380.20,405.57 380.70,405.04 381.20,405.19 381.70,405.93 382.20,404.94 382.70,406.13 383.20,406.11 383.70,405.44 384.20,405.72 384.70,405.77 385.20,406.18 385.70,404.87 386.20,405.99 386.70,405.21 387.20,405.02 387.70,405.45 388.20,405.29 388.70,404.91 389.20,404.60 389.70,404.93 390.20,406.13 390.70,406.38 391.20,405.73 391.70,405.99 392.20,405.14 392.70,405.36 393.20,405.54 393.70,404.86 394.20,404.91 394.70,405.45 395.20,405.24 395.70,404.87 396.20,405.59 396.70,405.27 397.20,405.91 397.70,405.40 398.20,405.25 398.70,405.46 399.20,405.31 399.70,405.07 400.20,405.20 400.70,405.77 401.20,405.72 401.70,406.04 402.20,404.55 402.70,405.20 403.20,405.19 403.70,405.49 404.20,405.17 404.70,405.14 405.20,405.79" stroke="#3ef514" stroke-width="2.10" fill="none" stroke-linejoin="round" /><path d="M166.2 404 V437" stroke="#3ef514" stroke-width="0.9"/><path d="M166.2 437 V579.7 M405.4 432 V579.7" stroke="#2aa010" stroke-width="0.6"/><path d="M405.4 405 V432" stroke="#3ef514" stroke-width="0.8"/><polyline points="559.40,482.16 559.73,478.78 560.06,474.71 560.39,475.00 560.72,473.71 561.05,475.32 561.38,466.63 561.71,460.52 562.04,468.99 562.37,479.47 562.70,478.62 563.03,480.85 563.36,482.34 563.69,482.53 564.02,474.15 564.35,470.31 564.68,471.03 565.01,473.64 565.34,472.69 565.67,473.43 566.00,478.34 566.33,476.38 566.66,475.13 566.99,465.99 567.32,466.31 567.65,476.00 567.98,474.68 568.31,477.42 568.64,480.45 568.97,469.62 569.30,463.73 569.63,471.32 569.96,476.34 570.29,476.63 570.62,476.47 570.95,473.85 571.28,470.40 571.61,477.15 571.94,477.90 572.27,471.91 572.60,474.87 572.93,468.54 573.26,467.18 573.59,469.18 573.92,471.90 574.25,474.80 574.58,467.59 574.91,469.11 575.24,471.67 575.57,472.15 575.90,468.88 576.23,472.68 576.56,475.97 576.89,478.00 577.22,478.81 577.55,475.23 577.88,478.66 578.21,479.59 578.54,480.80 578.87,479.91 579.20,487.33 579.53,478.76 579.86,479.08 580.19,483.63 580.52,485.28 580.85,481.49 581.18,478.57 581.51,476.75 581.84,469.57 582.17,474.44 582.50,473.69 582.83,482.27 583.16,481.89 583.49,485.51 583.82,488.46 584.15,493.28 584.48,491.46 584.81,488.95 585.14,488.78 585.47,480.55 585.80,473.23 586.13,479.46 586.46,479.31 586.79,484.83 587.12,484.63 587.45,474.96 587.78,486.73 588.11,492.53 588.44,492.61 588.77,488.18 589.10,486.55 589.43,474.82 589.76,470.44 590.09,473.73 590.42,471.68 590.75,480.74 591.08,479.90 591.41,477.92 591.74,472.80 592.07,468.72 592.40,473.92 592.73,476.48 593.06,481.06 593.39,477.20 593.72,480.37 594.05,477.67 594.38,471.73 594.71,467.94 595.04,462.18 595.37,469.87 595.70,481.18 596.03,489.43 596.36,480.16 596.69,477.71 597.02,482.40 597.35,481.36 597.68,480.58 598.01,480.19 598.34,483.48 598.67,486.64 599.00,484.07 599.33,475.68 599.66,477.39 599.99,480.44 600.32,476.28 600.65,480.95 600.98,474.59 601.31,468.23 601.64,473.54 601.97,468.02 602.30,469.99 602.63,468.29 602.96,467.34 603.29,463.04 603.62,467.89 603.95,477.65 604.28,476.90 604.61,479.89 604.94,484.77 605.27,485.72 605.60,479.22 605.93,475.92 606.26,471.11 606.59,476.38 606.92,476.39 607.25,475.63 607.58,484.13 607.91,480.68 608.24,477.34 608.57,484.80 608.90,482.28 609.23,480.46 609.56,470.37 609.89,468.61 610.22,468.58 610.55,462.35 610.88,461.98 611.21,475.43 611.54,477.35 611.87,483.19 612.20,494.28 612.53,490.23 612.86,488.78 613.19,483.52 613.52,484.86 613.85,481.22 614.18,486.94 614.51,484.08 614.84,476.05 615.17,472.12 615.50,479.68 615.83,489.78 616.16,487.23 616.49,484.93 616.82,473.73 617.15,473.07 617.48,477.20 617.81,483.31 618.14,482.00 618.47,483.54 618.80,486.16 619.13,472.97 619.46,468.96 619.79,469.05 620.12,465.20 620.45,466.06 620.78,475.43 621.11,465.70 621.44,462.17 621.77,460.48 622.10,465.92 622.43,472.97 622.76,472.01 623.09,471.85 623.42,474.96 623.75,471.59 624.08,463.15 624.41,462.04 624.74,478.86 625.07,482.62 625.40,475.79 625.73,468.23 626.06,469.30 626.39,475.69 626.72,464.99 627.05,473.40 627.38,479.42 627.71,482.60 628.04,487.31 628.37,488.56 628.70,490.35 629.03,474.39 629.36,466.65 629.69,465.14 630.02,471.01 630.35,471.67 630.68,483.62 631.01,481.82 631.34,477.16 631.67,476.68 632.00,469.06 632.33,464.32 632.66,458.59 632.99,460.89 633.32,463.15 633.65,465.10 633.98,472.77 634.31,472.55 634.64,469.22 634.97,470.51 635.30,466.81 635.63,469.10 635.96,468.41 636.29,467.04 636.62,469.74 636.95,471.87 637.28,470.78 637.61,468.48 637.94,470.90 638.27,467.99 638.60,459.28 638.93,470.65 639.26,474.02 639.59,478.86 639.92,477.57 640.25,483.26 640.58,485.39 640.91,488.55 641.24,487.62 641.57,486.75 641.90,496.48 642.23,479.86 642.56,481.30 642.89,485.10 643.22,490.77 643.55,493.69 643.88,492.14 644.21,499.26 644.54,493.56 644.87,501.18 645.20,488.24 645.53,490.33 645.86,489.16 646.19,488.82 646.52,492.74 646.85,499.82 647.18,489.96 647.51,486.28 647.84,488.60 648.17,483.65 648.50,487.50 648.83,480.13 649.16,475.63 649.49,473.50 649.82,472.69 650.15,469.25 650.48,466.99 650.81,472.33 651.14,476.18 651.47,476.20 651.80,476.80 652.13,488.85 652.46,490.41 652.79,491.14 653.12,483.28 653.45,474.96 653.78,476.98 654.11,475.79 654.44,478.80 654.77,479.99 655.10,488.91 655.43,484.80 655.76,481.86 656.09,481.73 656.42,478.96 656.75,475.67 657.08,471.17 657.41,475.17 657.74,482.59 658.07,479.29 658.40,471.75 658.73,469.42 659.06,471.76 659.39,473.60 659.72,475.07 660.05,468.05 660.38,466.19 660.71,472.37 661.04,471.31 661.37,472.17 661.70,472.17 662.03,472.51 662.36,477.07 662.69,477.18 663.02,478.33 663.35,474.12 663.68,468.20 664.01,478.52 664.34,485.27 664.67,487.20 665.00,485.59 665.33,490.38 665.66,486.83 665.99,486.92 666.32,487.62 666.65,479.81 666.98,489.20 667.31,488.76 667.64,482.42 667.97,481.76 668.30,478.78 668.63,478.39 668.96,481.28 669.29,483.44 669.62,486.08 669.95,480.49 670.28,481.77 670.61,473.91 670.94,478.91 671.27,472.91 671.60,473.80 671.93,475.23 672.26,466.14 672.59,463.10 672.92,464.09 673.25,470.82 673.58,463.60 673.91,469.82 674.24,467.61 674.57,473.51 674.90,475.88 675.23,474.45 675.56,478.79 675.89,480.22 676.22,469.59 676.55,467.36 676.88,467.04 677.21,462.75 677.54,471.05 677.87,473.05 678.20,478.68 678.53,476.05 678.86,479.81 679.19,475.07 679.52,483.15" stroke="#ff1f66" stroke-width="1.05" fill="none" stroke-linejoin="round" /><polyline points="920.50,475.40 920.83,477.37 921.16,473.21 921.49,474.95 921.82,476.06 922.15,475.27 922.48,476.25 922.81,478.01 923.14,475.36 923.47,480.44 923.80,477.92 924.13,482.61 924.46,485.96 924.79,478.22 925.12,481.42 925.45,472.57 925.78,476.72 926.11,474.52 926.44,477.07 926.77,474.64 927.10,472.68 927.43,478.71 927.76,472.90 928.09,458.19 928.42,456.25 928.75,457.80 929.08,464.19 929.41,456.49 929.74,460.38 930.07,462.58 930.40,467.81 930.73,469.74 931.06,470.86 931.39,470.45 931.72,469.18 932.05,477.44 932.38,476.11 932.71,475.21 933.04,474.09 933.37,475.92 933.70,473.06 934.03,465.91 934.36,470.89 934.69,477.11 935.02,474.69 935.35,476.81 935.68,481.79 936.01,480.76 936.34,482.33 936.67,483.13 937.00,480.05 937.33,490.45 937.66,486.93 937.99,490.32 938.32,490.32 938.65,491.16 938.98,482.51 939.31,487.64 939.64,488.31 939.97,483.74 940.30,481.69 940.63,488.08 940.96,488.78 941.29,481.67 941.62,480.97 941.95,482.57 942.28,479.42 942.61,478.70 942.94,481.36 943.27,481.84 943.60,471.00 943.93,473.24 944.26,471.75 944.59,465.97 944.92,473.83 945.25,483.08 945.58,479.36 945.91,477.20 946.24,480.44 946.57,485.71 946.90,483.12 947.23,477.51 947.56,480.17 947.89,483.87 948.22,490.04 948.55,482.98 948.88,480.99 949.21,479.20 949.54,483.94 949.87,480.02 950.20,474.96 950.53,475.12 950.86,478.90 951.19,480.53 951.52,478.55 951.85,470.39 952.18,470.81 952.51,476.13 952.84,478.44 953.17,487.85 953.50,483.90 953.83,485.40 954.16,483.57 954.49,480.88 954.82,473.42 955.15,475.37 955.48,478.89 955.81,483.27 956.14,482.42 956.47,478.48 956.80,473.96 957.13,471.85 957.46,474.34 957.79,471.96 958.12,473.40 958.45,474.03 958.78,474.53 959.11,471.90 959.44,476.03 959.77,474.42 960.10,468.07 960.43,467.95 960.76,483.09 961.09,499.63 961.42,498.47 961.75,502.61 962.08,492.98 962.41,488.51 962.74,481.77 963.07,480.81 963.40,479.80 963.73,484.82 964.06,479.94 964.39,483.19 964.72,479.13 965.05,473.56 965.38,477.85 965.71,478.71 966.04,483.84 966.37,484.84 966.70,475.30 967.03,477.85 967.36,470.89 967.69,474.41 968.02,469.31 968.35,459.18 968.68,457.84 969.01,462.62 969.34,466.43 969.67,472.24 970.00,469.82 970.33,469.49 970.66,464.89 970.99,468.84 971.32,465.59 971.65,470.37 971.98,464.39 972.31,467.79 972.64,472.51 972.97,468.80 973.30,465.26 973.63,463.26 973.96,461.12 974.29,459.43 974.62,469.43 974.95,463.43 975.28,456.78 975.61,459.65 975.94,467.12 976.27,470.30 976.60,474.60 976.93,473.51 977.26,472.90 977.59,474.72 977.92,475.78 978.25,479.84 978.58,476.40 978.91,477.28 979.24,472.58 979.57,470.82 979.90,467.55 980.23,469.27 980.56,472.96 980.89,479.38 981.22,474.11 981.55,471.13 981.88,476.89 982.21,477.04 982.54,478.77 982.87,482.90 983.20,478.32 983.53,477.54 983.86,476.32 984.19,475.75 984.52,479.83 984.85,488.08 985.18,491.51 985.51,486.78 985.84,482.10 986.17,480.68 986.50,476.02 986.83,467.42 987.16,473.43 987.49,471.43 987.82,471.32 988.15,469.13 988.48,465.67 988.81,471.71 989.14,470.43 989.47,456.59 989.80,463.93 990.13,474.05 990.46,484.58 990.79,481.73 991.12,483.72 991.45,487.72 991.78,484.64 992.11,480.51 992.44,481.77 992.77,487.64 993.10,490.42 993.43,497.17 993.76,497.13 994.09,495.94 994.42,491.51 994.75,488.23 995.08,483.92 995.41,474.88 995.74,473.14 996.07,473.82 996.40,474.25 996.73,480.04 997.06,492.80 997.39,494.65 997.72,480.33 998.05,475.65 998.38,470.73 998.71,481.83 999.04,480.33 999.37,479.03 999.70,471.15 1000.03,476.37 1000.36,482.56 1000.69,478.51 1001.02,466.19 1001.35,461.75 1001.68,464.01 1002.01,461.23 1002.34,462.13 1002.67,474.37 1003.00,482.16 1003.33,485.76 1003.66,479.78 1003.99,470.19 1004.32,469.35 1004.65,477.81 1004.98,478.95 1005.31,484.44 1005.64,477.48 1005.97,481.68 1006.30,483.67 1006.63,482.30 1006.96,486.86 1007.29,489.02 1007.62,487.45 1007.95,480.74 1008.28,479.90 1008.61,476.73 1008.94,490.20 1009.27,491.42 1009.60,489.70 1009.93,488.05 1010.26,481.18 1010.59,491.04 1010.92,491.97 1011.25,487.98 1011.58,483.71 1011.91,478.00 1012.24,469.49 1012.57,474.65 1012.90,483.18 1013.23,490.14 1013.56,489.69 1013.89,490.76 1014.22,494.87 1014.55,492.23 1014.88,495.71 1015.21,486.87 1015.54,480.88 1015.87,483.42 1016.20,481.65 1016.53,485.97 1016.86,489.32 1017.19,480.58 1017.52,493.47 1017.85,487.44 1018.18,488.87 1018.51,488.96 1018.84,480.15 1019.17,480.35 1019.50,486.30 1019.83,483.43 1020.16,485.03 1020.49,489.66 1020.82,489.67 1021.15,480.88 1021.48,483.82 1021.81,495.53 1022.14,479.25 1022.47,473.36 1022.80,475.04 1023.13,477.88 1023.46,479.46 1023.79,487.15 1024.12,483.67 1024.45,484.17 1024.78,482.78 1025.11,483.30 1025.44,481.85 1025.77,481.18 1026.10,481.51 1026.43,477.25 1026.76,472.40 1027.09,472.89 1027.42,472.83 1027.75,481.19 1028.08,472.86 1028.41,472.22 1028.74,462.28 1029.07,475.42 1029.40,484.87 1029.73,482.54 1030.06,476.86 1030.39,479.67 1030.72,468.43 1031.05,462.70 1031.38,462.13 1031.71,470.61 1032.04,471.93 1032.37,473.01 1032.70,473.97 1033.03,475.38 1033.36,474.60 1033.69,471.24 1034.02,468.31 1034.35,467.16 1034.68,467.17 1035.01,469.17 1035.34,473.36 1035.67,471.21 1036.00,474.40 1036.33,475.57" stroke="#ff1f66" stroke-width="1.05" fill="none" stroke-linejoin="round" /><polyline points="679.52,483.15 680.00,500.00 680.30,554.00 919.30,366.40" stroke="#ff1f66" stroke-width="0.95" fill="none" stroke-linejoin="round" /><path d="M919.5 366.4 V387" stroke="#ff1f66" stroke-width="1.0"/><path d="M919.5 387 V460" stroke="#ff1f66" stroke-width="0.5"/><polyline points="919.50,460.00 920.50,475.40" stroke="#ff1f66" stroke-width="0.85" fill="none" stroke-linejoin="round" /></svg>
<div id="t0" class="t" style="position:absolute;left:15.70px;top:6.97px;font-size:7.00px;line-height:7.00px;color:#10102a;white-space:pre;font-weight:normal;transform:scaleX(0.8707);transform-origin:left;-webkit-text-stroke:0.2px currentColor;">File</div>
<div id="t1" class="t" style="position:absolute;left:34.20px;top:6.97px;font-size:7.00px;line-height:7.00px;color:#10102a;white-space:pre;font-weight:normal;transform:scaleX(0.9422);transform-origin:left;-webkit-text-stroke:0.2px currentColor;">Edit</div>
<div id="t2" class="t" style="position:absolute;left:54.00px;top:6.97px;font-size:7.00px;line-height:7.00px;color:#10102a;white-space:pre;font-weight:normal;transform:scaleX(0.9646);transform-origin:left;-webkit-text-stroke:0.2px currentColor;">Control</div>
<div id="t3" class="t" style="position:absolute;left:84.70px;top:6.97px;font-size:7.00px;line-height:7.00px;color:#10102a;white-space:pre;font-weight:normal;transform:scaleX(0.8894);transform-origin:left;-webkit-text-stroke:0.2px currentColor;">Source</div>
<div id="t4" class="t" style="position:absolute;left:113.00px;top:6.97px;font-size:7.00px;line-height:7.00px;color:#10102a;white-space:pre;font-weight:normal;transform:scaleX(0.9814);transform-origin:left;-webkit-text-stroke:0.2px currentColor;">Input</div>
<div id="t5" class="t" style="position:absolute;left:138.00px;top:6.97px;font-size:7.00px;line-height:7.00px;color:#10102a;white-space:pre;font-weight:normal;transform:scaleX(0.8529);transform-origin:left;-webkit-text-stroke:0.2px currentColor;">MeasSetup</div>
<div id="t6" class="t" style="position:absolute;left:178.90px;top:6.97px;font-size:7.00px;line-height:7.00px;color:#10102a;white-space:pre;font-weight:normal;transform:scaleX(0.8216);transform-origin:left;-webkit-text-stroke:0.2px currentColor;">Trace</div>
<div id="t7" class="t" style="position:absolute;left:203.00px;top:6.97px;font-size:7.00px;line-height:7.00px;color:#10102a;white-space:pre;font-weight:normal;transform:scaleX(0.8914);transform-origin:left;-webkit-text-stroke:0.2px currentColor;">Markers</div>
<div id="t8" class="t" style="position:absolute;left:234.00px;top:6.97px;font-size:7.00px;line-height:7.00px;color:#10102a;white-space:pre;font-weight:normal;transform:scaleX(0.9792);transform-origin:left;-webkit-text-stroke:0.2px currentColor;">Window</div>
<div id="t9" class="t" style="position:absolute;left:266.90px;top:6.97px;font-size:7.00px;line-height:7.00px;color:#10102a;white-space:pre;font-weight:normal;transform:scaleX(0.9607);transform-origin:left;-webkit-text-stroke:0.2px currentColor;">Utilities</div>
<div id="t10" class="t" style="position:absolute;left:296.60px;top:6.97px;font-size:7.00px;line-height:7.00px;color:#10102a;white-space:pre;font-weight:normal;transform:scaleX(0.9706);transform-origin:left;-webkit-text-stroke:0.2px currentColor;">Help</div>
<div id="t11" class="t" style="position:absolute;left:72.00px;top:20.07px;font-size:7.00px;line-height:7.00px;color:#200818;white-space:pre;font-weight:normal;transform:scaleX(0.9450);transform-origin:left;-webkit-text-stroke:0.2px currentColor;">Default</div>
<div id="t12" class="t" style="position:absolute;left:192.00px;top:19.57px;font-size:7.00px;line-height:7.00px;color:#ffffff;white-space:pre;font-weight:bold;transform:translateX(-50%) scaleX(1.0000);">B</div>
<div id="t13" class="t" style="position:absolute;left:341.50px;top:20.21px;font-size:6.60px;line-height:6.60px;color:#707070;white-space:pre;font-weight:normal;transform:translateX(-50%) scaleX(1.0000);">50 %</div>
<div id="t14" class="t" style="position:absolute;left:359.50px;top:20.21px;font-size:6.60px;line-height:6.60px;color:#707070;white-space:pre;font-weight:normal;transform:translateX(-50%) scaleX(1.0000);">0 %</div>
<div id="t15" class="t" style="position:absolute;left:371.00px;top:20.07px;font-size:7.00px;line-height:7.00px;color:#9aa3b0;white-space:pre;font-weight:normal;">Color Normal</div>
<div id="t16" class="t" style="position:absolute;left:16.60px;top:35.17px;font-size:7.00px;line-height:7.00px;color:#141428;white-space:pre;font-weight:normal;transform:scaleX(0.9030);transform-origin:left;-webkit-text-stroke:0.2px currentColor;">A: Ch1 Spectrum</div>
<div id="t17" class="t" style="position:absolute;left:531.80px;top:34.87px;font-size:7.00px;line-height:7.00px;color:#141428;white-space:pre;font-weight:normal;transform:scaleX(0.9092);transform-origin:left;-webkit-text-stroke:0.2px currentColor;">C: Ch1 Main Time</div>
<div id="t18" class="t" style="position:absolute;left:16.80px;top:320.37px;font-size:7.00px;line-height:7.00px;color:#140c08;white-space:pre;font-weight:bold;transform:scaleX(0.8774);transform-origin:left;">B: Ch1 Main Time</div>
<div id="t19" class="t" style="position:absolute;left:532.00px;top:320.57px;font-size:7.00px;line-height:7.00px;color:#141428;white-space:pre;font-weight:normal;transform:scaleX(0.9074);transform-origin:left;-webkit-text-stroke:0.2px currentColor;">D: Ch1 Main Time</div>
<div id="t20" class="t" style="position:absolute;left:44.20px;top:50.13px;font-size:6.70px;line-height:6.70px;color:#f2f2f2;white-space:pre;font-weight:normal;letter-spacing:-0.1px;">Rng 0 dBm</div>
<div id="t21" class="t" style="position:absolute;right:1018.30px;top:57.33px;font-size:6.70px;line-height:6.70px;color:#f2f2f2;white-space:pre;font-weight:normal;letter-spacing:-0.1px;">-43.6</div>
<div id="t22" class="t" style="position:absolute;right:1018.30px;top:66.33px;font-size:6.70px;line-height:6.70px;color:#f2f2f2;white-space:pre;font-weight:normal;letter-spacing:-0.1px;">dBm</div>
<div id="t23" class="t" style="position:absolute;right:1018.30px;top:132.33px;font-size:6.70px;line-height:6.70px;color:#f2f2f2;white-space:pre;font-weight:normal;letter-spacing:-0.1px;">LogMag</div>
<div id="t24" class="t" style="position:absolute;right:1018.30px;top:197.73px;font-size:6.70px;line-height:6.70px;color:#f2f2f2;white-space:pre;font-weight:normal;letter-spacing:-0.1px;">1</div>
<div id="t25" class="t" style="position:absolute;right:1018.30px;top:207.33px;font-size:6.70px;line-height:6.70px;color:#f2f2f2;white-space:pre;font-weight:normal;letter-spacing:-0.1px;">dB</div>
<div id="t26" class="t" style="position:absolute;right:1018.30px;top:214.53px;font-size:6.70px;line-height:6.70px;color:#f2f2f2;white-space:pre;font-weight:normal;letter-spacing:-0.1px;">/div</div>
<div id="t27" class="t" style="position:absolute;right:1018.30px;top:281.33px;font-size:6.70px;line-height:6.70px;color:#f2f2f2;white-space:pre;font-weight:normal;letter-spacing:-0.1px;">-53.8</div>
<div id="t28" class="t" style="position:absolute;right:1018.30px;top:288.83px;font-size:6.70px;line-height:6.70px;color:#f2f2f2;white-space:pre;font-weight:normal;letter-spacing:-0.1px;">dBm</div>
<div id="t29" class="t" style="position:absolute;left:44.00px;top:297.63px;font-size:6.70px;line-height:6.70px;color:#f2f2f2;white-space:pre;font-weight:normal;letter-spacing:-0.1px;">Center 3 GHz</div>
<div id="t30" class="t" style="position:absolute;left:44.00px;top:305.63px;font-size:6.70px;line-height:6.70px;color:#f2f2f2;white-space:pre;font-weight:normal;letter-spacing:-0.1px;">Res BW 248.755 kHz</div>
<div id="t31" class="t" style="position:absolute;right:537.80px;top:297.63px;font-size:6.70px;line-height:6.70px;color:#f2f2f2;white-space:pre;font-weight:normal;letter-spacing:-0.1px;">Span 4.8 GHz</div>
<div id="t32" class="t" style="position:absolute;right:537.80px;top:305.63px;font-size:6.70px;line-height:6.70px;color:#f2f2f2;white-space:pre;font-weight:normal;letter-spacing:-0.1px;">TimeLen 4.02002 uSec</div>
<div id="t33" class="t" style="position:absolute;left:49.80px;top:56.76px;font-size:9.50px;line-height:9.50px;color:#4a4a4a;white-space:pre;font-weight:normal;">Beta Code</div>
<div id="t34" class="t" style="position:absolute;left:49.80px;top:68.56px;font-size:9.50px;line-height:9.50px;color:#4a4a4a;white-space:pre;font-weight:normal;">Not For Sale</div>
<div id="t35" class="t" style="position:absolute;left:271.00px;top:49.33px;font-size:6.70px;line-height:6.70px;color:#e8e800;white-space:pre;font-weight:normal;">RMS 16</div>
<div id="t36" class="t" style="position:absolute;left:559.40px;top:50.13px;font-size:6.70px;line-height:6.70px;color:#f2f2f2;white-space:pre;font-weight:normal;letter-spacing:-0.1px;">Rng 313.2278 mV</div>
<div id="t37" class="t" style="position:absolute;right:503.10px;top:57.33px;font-size:6.70px;line-height:6.70px;color:#f2f2f2;white-space:pre;font-weight:normal;letter-spacing:-0.1px;">50</div>
<div id="t38" class="t" style="position:absolute;right:503.10px;top:66.33px;font-size:6.70px;line-height:6.70px;color:#f2f2f2;white-space:pre;font-weight:normal;letter-spacing:-0.1px;">kdeg</div>
<div id="t39" class="t" style="position:absolute;right:503.10px;top:132.33px;font-size:6.70px;line-height:6.70px;color:#f2f2f2;white-space:pre;font-weight:normal;letter-spacing:-0.1px;">Un Phs</div>
<div id="t40" class="t" style="position:absolute;right:503.10px;top:197.73px;font-size:6.70px;line-height:6.70px;color:#f2f2f2;white-space:pre;font-weight:normal;letter-spacing:-0.1px;">50</div>
<div id="t41" class="t" style="position:absolute;right:503.10px;top:207.33px;font-size:6.70px;line-height:6.70px;color:#f2f2f2;white-space:pre;font-weight:normal;letter-spacing:-0.1px;">kdeg</div>
<div id="t42" class="t" style="position:absolute;right:503.10px;top:214.53px;font-size:6.70px;line-height:6.70px;color:#f2f2f2;white-space:pre;font-weight:normal;letter-spacing:-0.1px;">/div</div>
<div id="t43" class="t" style="position:absolute;right:503.10px;top:281.33px;font-size:6.70px;line-height:6.70px;color:#f2f2f2;white-space:pre;font-weight:normal;letter-spacing:-0.1px;">-450</div>
<div id="t44" class="t" style="position:absolute;right:503.10px;top:288.83px;font-size:6.70px;line-height:6.70px;color:#f2f2f2;white-space:pre;font-weight:normal;letter-spacing:-0.1px;">kdeg</div>
<div id="t45" class="t" style="position:absolute;left:559.20px;top:297.63px;font-size:6.70px;line-height:6.70px;color:#f2f2f2;white-space:pre;font-weight:normal;letter-spacing:-0.1px;">Start -1 uSec</div>
<div id="t46" class="t" style="position:absolute;left:559.20px;top:305.63px;font-size:6.70px;line-height:6.70px;color:#f2f2f2;white-space:pre;font-weight:normal;letter-spacing:-0.1px;">Trig Ch 1</div>
<div id="t47" class="t" style="position:absolute;left:790.00px;top:305.63px;font-size:6.70px;line-height:6.70px;color:#f2f2f2;white-space:pre;font-weight:normal;transform:translateX(-50%) scaleX(1.0000);letter-spacing:-0.1px;">Delay -1 uSec</div>
<div id="t48" class="t" style="position:absolute;right:23.50px;top:297.63px;font-size:6.70px;line-height:6.70px;color:#f2f2f2;white-space:pre;font-weight:normal;letter-spacing:-0.1px;">Stop 3.0198 uSec</div>
<div id="t49" class="t" style="position:absolute;right:23.50px;top:305.63px;font-size:6.70px;line-height:6.70px;color:#f2f2f2;white-space:pre;font-weight:normal;letter-spacing:-0.1px;">Trig Lvl 10 mV</div>
<div id="t50" class="t" style="position:absolute;left:565.00px;top:56.76px;font-size:9.50px;line-height:9.50px;color:#4a4a4a;white-space:pre;font-weight:normal;">Beta Code</div>
<div id="t51" class="t" style="position:absolute;left:565.00px;top:68.56px;font-size:9.50px;line-height:9.50px;color:#4a4a4a;white-space:pre;font-weight:normal;">Not For Sale</div>
<div id="t52" class="t" style="position:absolute;left:44.20px;top:335.03px;font-size:6.70px;line-height:6.70px;color:#f2f2f2;white-space:pre;font-weight:normal;letter-spacing:-0.1px;">Rng 316.2278 mV</div>
<div id="t53" class="t" style="position:absolute;right:1018.30px;top:342.13px;font-size:6.70px;line-height:6.70px;color:#f2f2f2;white-space:pre;font-weight:normal;letter-spacing:-0.1px;">0</div>
<div id="t54" class="t" style="position:absolute;right:1018.30px;top:351.13px;font-size:6.70px;line-height:6.70px;color:#f2f2f2;white-space:pre;font-weight:normal;letter-spacing:-0.1px;">dBVpk</div>
<div id="t55" class="t" style="position:absolute;right:1018.30px;top:417.13px;font-size:6.70px;line-height:6.70px;color:#f2f2f2;white-space:pre;font-weight:normal;letter-spacing:-0.1px;">LogMag</div>
<div id="t56" class="t" style="position:absolute;right:1018.30px;top:482.53px;font-size:6.70px;line-height:6.70px;color:#f2f2f2;white-space:pre;font-weight:normal;letter-spacing:-0.1px;">5</div>
<div id="t57" class="t" style="position:absolute;right:1018.30px;top:492.13px;font-size:6.70px;line-height:6.70px;color:#f2f2f2;white-space:pre;font-weight:normal;letter-spacing:-0.1px;">dB</div>
<div id="t58" class="t" style="position:absolute;right:1018.30px;top:499.33px;font-size:6.70px;line-height:6.70px;color:#f2f2f2;white-space:pre;font-weight:normal;letter-spacing:-0.1px;">/div</div>
<div id="t59" class="t" style="position:absolute;right:1018.30px;top:566.13px;font-size:6.70px;line-height:6.70px;color:#f2f2f2;white-space:pre;font-weight:normal;letter-spacing:-0.1px;">-50</div>
<div id="t60" class="t" style="position:absolute;right:1018.30px;top:573.63px;font-size:6.70px;line-height:6.70px;color:#f2f2f2;white-space:pre;font-weight:normal;letter-spacing:-0.1px;">dBVpk</div>
<div id="t61" class="t" style="position:absolute;left:44.00px;top:582.43px;font-size:6.70px;line-height:6.70px;color:#f2f2f2;white-space:pre;font-weight:normal;letter-spacing:-0.1px;">Start -1 uSec</div>
<div id="t62" class="t" style="position:absolute;left:44.00px;top:590.43px;font-size:6.70px;line-height:6.70px;color:#f2f2f2;white-space:pre;font-weight:normal;letter-spacing:-0.1px;">Trig Ch 1</div>
<div id="t63" class="t" style="position:absolute;left:276.50px;top:590.43px;font-size:6.70px;line-height:6.70px;color:#f2f2f2;white-space:pre;font-weight:normal;transform:translateX(-50%) scaleX(1.0000);letter-spacing:-0.1px;">Delay -1 uSec</div>
<div id="t64" class="t" style="position:absolute;right:537.80px;top:582.43px;font-size:6.70px;line-height:6.70px;color:#f2f2f2;white-space:pre;font-weight:normal;letter-spacing:-0.1px;">Stop 3.0199 uSec</div>
<div id="t65" class="t" style="position:absolute;right:537.80px;top:590.43px;font-size:6.70px;line-height:6.70px;color:#f2f2f2;white-space:pre;font-weight:normal;letter-spacing:-0.1px;">Trig Lvl 10 mV</div>
<div id="t66" class="t" style="position:absolute;left:49.80px;top:342.86px;font-size:9.50px;line-height:9.50px;color:#4a4a4a;white-space:pre;font-weight:normal;">Beta Code</div>
<div id="t67" class="t" style="position:absolute;left:49.80px;top:354.66px;font-size:9.50px;line-height:9.50px;color:#4a4a4a;white-space:pre;font-weight:normal;">Not For Sale</div>
<div id="t68" class="t" style="position:absolute;left:559.40px;top:335.03px;font-size:6.70px;line-height:6.70px;color:#f2f2f2;white-space:pre;font-weight:normal;letter-spacing:-0.1px;">Rng 316.2278 mV</div>
<div id="t69" class="t" style="position:absolute;right:503.10px;top:342.13px;font-size:6.70px;line-height:6.70px;color:#f2f2f2;white-space:pre;font-weight:normal;letter-spacing:-0.1px;">2.5</div>
<div id="t70" class="t" style="position:absolute;right:503.10px;top:351.13px;font-size:6.70px;line-height:6.70px;color:#f2f2f2;white-space:pre;font-weight:normal;letter-spacing:-0.1px;">GHz</div>
<div id="t71" class="t" style="position:absolute;right:503.10px;top:417.13px;font-size:6.70px;line-height:6.70px;color:#f2f2f2;white-space:pre;font-weight:normal;letter-spacing:-0.1px;">Delay</div>
<div id="t72" class="t" style="position:absolute;right:503.10px;top:482.53px;font-size:6.70px;line-height:6.70px;color:#f2f2f2;white-space:pre;font-weight:normal;letter-spacing:-0.1px;">500</div>
<div id="t73" class="t" style="position:absolute;right:503.10px;top:492.13px;font-size:6.70px;line-height:6.70px;color:#f2f2f2;white-space:pre;font-weight:normal;letter-spacing:-0.1px;">MHz</div>
<div id="t74" class="t" style="position:absolute;right:503.10px;top:499.33px;font-size:6.70px;line-height:6.70px;color:#f2f2f2;white-space:pre;font-weight:normal;letter-spacing:-0.1px;">/div</div>
<div id="t75" class="t" style="position:absolute;right:503.10px;top:566.13px;font-size:6.70px;line-height:6.70px;color:#f2f2f2;white-space:pre;font-weight:normal;letter-spacing:-0.1px;">-2.5</div>
<div id="t76" class="t" style="position:absolute;right:503.10px;top:573.63px;font-size:6.70px;line-height:6.70px;color:#f2f2f2;white-space:pre;font-weight:normal;letter-spacing:-0.1px;">GHz</div>
<div id="t77" class="t" style="position:absolute;left:559.20px;top:582.43px;font-size:6.70px;line-height:6.70px;color:#f2f2f2;white-space:pre;font-weight:normal;letter-spacing:-0.1px;">Start -1 uSec</div>
<div id="t78" class="t" style="position:absolute;left:559.20px;top:590.43px;font-size:6.70px;line-height:6.70px;color:#f2f2f2;white-space:pre;font-weight:normal;letter-spacing:-0.1px;">Trig Ch 1</div>
<div id="t79" class="t" style="position:absolute;left:790.00px;top:590.43px;font-size:6.70px;line-height:6.70px;color:#f2f2f2;white-space:pre;font-weight:normal;transform:translateX(-50%) scaleX(1.0000);letter-spacing:-0.1px;">Delay -1 uSec</div>
<div id="t80" class="t" style="position:absolute;right:23.50px;top:582.43px;font-size:6.70px;line-height:6.70px;color:#f2f2f2;white-space:pre;font-weight:normal;letter-spacing:-0.1px;">Stop 3.0198 uSec</div>
<div id="t81" class="t" style="position:absolute;right:23.50px;top:590.43px;font-size:6.70px;line-height:6.70px;color:#f2f2f2;white-space:pre;font-weight:normal;letter-spacing:-0.1px;">Trig Lvl 10 mV</div>
<div id="t82" class="t" style="position:absolute;left:565.00px;top:342.86px;font-size:9.50px;line-height:9.50px;color:#4a4a4a;white-space:pre;font-weight:normal;">Beta Code</div>
<div id="t83" class="t" style="position:absolute;left:565.00px;top:354.66px;font-size:9.50px;line-height:9.50px;color:#4a4a4a;white-space:pre;font-weight:normal;">Not For Sale</div>
<div id="t84" class="t" style="position:absolute;left:19.00px;top:607.07px;font-size:7.00px;line-height:7.00px;color:#2a2440;white-space:pre;font-weight:normal;transform:scaleX(0.8560);transform-origin:left;">Average In Progress</div>
<div id="t85" class="t" style="position:absolute;left:876.00px;top:607.07px;font-size:7.00px;line-height:7.00px;color:#2a2a40;white-space:pre;font-weight:normal;transform:scaleX(0.8438);transform-origin:left;">Spectrum Rate: 201.4 GHz/s</div>
<div id="t86" class="t" style="position:absolute;left:969.00px;top:607.07px;font-size:7.00px;line-height:7.00px;color:#2a2a40;white-space:pre;font-weight:normal;transform:scaleX(0.7922);transform-origin:left;">INT REF</div>
<div id="t87" class="t" style="position:absolute;left:1007.00px;top:607.07px;font-size:7.00px;line-height:7.00px;color:#2a2a40;white-space:pre;font-weight:normal;transform:scaleX(0.8618);transform-origin:left;">CAL: None</div>
</body></html>
